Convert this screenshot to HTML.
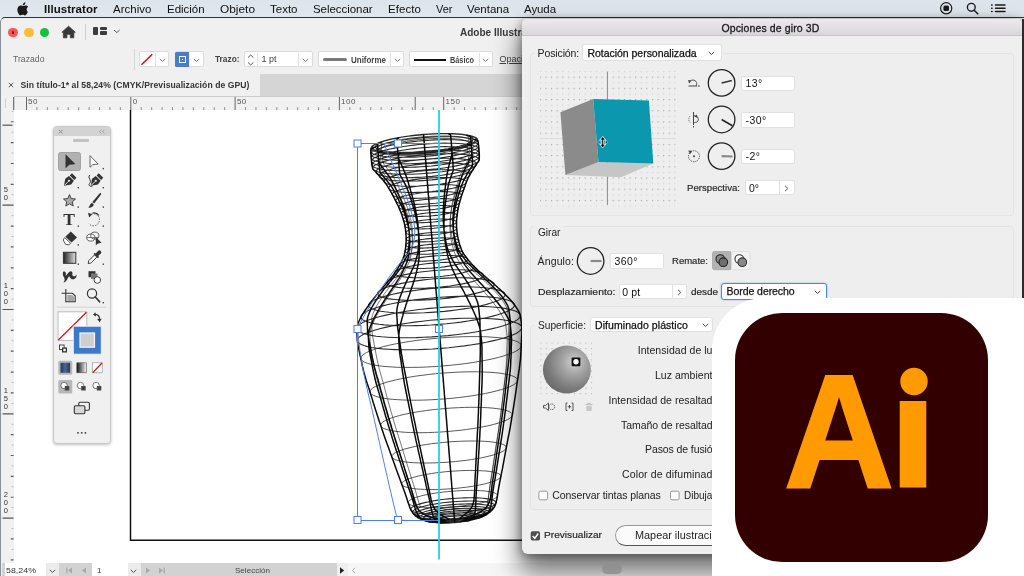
<!DOCTYPE html>
<html lang="es"><head><meta charset="utf-8"><title>Opciones de giro 3D</title><style>
html,body{margin:0;padding:0;}
body{width:1024px;height:576px;overflow:hidden;background:#fff;position:relative;font-family:"Liberation Sans",sans-serif;}
#root{position:absolute;left:0;top:0;width:1024px;height:576px;overflow:hidden;will-change:transform;}
.b{position:absolute;box-sizing:border-box;}
.t{position:absolute;white-space:pre;transform-origin:0 50%;}
svg{position:absolute;overflow:visible;}
</style></head><body><div id="root">
<div class="b" style="left:0.00px;top:0.00px;width:1024.00px;height:17.60px;background:linear-gradient(#dde4ec,#e1e7ee);"></div>
<svg style="left:16.800px;top:1.600px" width="11" height="13.600" viewBox="-1 0 12 14" preserveAspectRatio="none"><path d="M8.2 0.2c0.1 0.9-0.3 1.7-0.8 2.3-0.5 0.6-1.3 1-2.1 0.9-0.1-0.8 0.3-1.7 0.8-2.2C6.6 0.6 7.5 0.2 8.2 0.2zM10.8 10c-0.3 0.8-0.5 1.100-0.900 1.800-0.600 0.900-1.400 2.000-2.400 2.000-0.900 0-1.100-0.600-2.300-0.600-1.200 0-1.500 0.600-2.400 0.600-1 0-1.700-1-2.300-1.900C-0.800 9.500-1.000 6.600 0.300 5.100c0.700-0.900 1.800-1.500 2.900-1.500 1.100 0 1.800 0.600 2.700 0.600 0.900 0 1.400-0.600 2.700-0.600 0.900 0 1.900 0.500 2.600 1.400C8.900 6.300 9.300 9.200 10.800 10z" fill="#1a1a1a"/></svg>
<span class="t" style="left:44.00px;top:1.00px;font-size:11.5px;line-height:16px;color:#111;font-weight:700;letter-spacing:0.041px;">Illustrator</span>
<span class="t" style="left:113.00px;top:1.00px;font-size:11.5px;line-height:16px;color:#111;letter-spacing:0.020px;">Archivo</span>
<span class="t" style="left:167.00px;top:1.00px;font-size:11.5px;line-height:16px;color:#111;letter-spacing:-0.031px;">Edición</span>
<span class="t" style="left:220.00px;top:1.00px;font-size:11.5px;line-height:16px;color:#111;transform:scaleX(1.0327);">Objeto</span>
<span class="t" style="left:270.00px;top:1.00px;font-size:11.5px;line-height:16px;color:#111;">Texto</span>
<span class="t" style="left:313.00px;top:1.00px;font-size:11.5px;line-height:16px;color:#111;letter-spacing:-0.054px;">Seleccionar</span>
<span class="t" style="left:388.00px;top:1.00px;font-size:11.5px;line-height:16px;color:#111;letter-spacing:0.065px;">Efecto</span>
<span class="t" style="left:436.00px;top:1.00px;font-size:11.5px;line-height:16px;color:#111;transform:scaleX(0.9557);">Ver</span>
<span class="t" style="left:467.00px;top:1.00px;font-size:11.5px;line-height:16px;color:#111;letter-spacing:-0.031px;">Ventana</span>
<span class="t" style="left:524.00px;top:1.00px;font-size:11.5px;line-height:16px;color:#111;letter-spacing:-0.081px;">Ayuda</span>
<svg style="left:938px;top:0px" width="80" height="18" viewBox="938 0 80 18"><circle cx="946.2" cy="8.3" r="5.6" fill="none" stroke="#1a1a1a" stroke-width="1.2"/><rect x="943.4" y="5.5" width="5.6" height="5.6" rx="1.6" fill="#1a1a1a"/><circle cx="971.3" cy="7.3" r="3.9" fill="none" stroke="#1a1a1a" stroke-width="1.4"/><path d="M974.1 10.200 L977.800 13.800" stroke="#1a1a1a" stroke-width="1.6" stroke-linecap="round"/><g stroke="#1a1a1a" stroke-width="1.5" stroke-linecap="round"><path d="M995.5 5h9.500M995.500 8.300h9.500M995.500 11.600h9.500"/><path d="M991.600 5h0.500M991.600 8.300h0.500M991.600 11.600h0.500"/></g></svg>
<div class="b" style="left:0.00px;top:17.20px;width:1024.00px;height:560.00px;background:#f0f0f0;border-top:1.900px solid #2e3338;border-left:1.600px solid #88929a;border-top-left-radius:5px;"></div>
<div class="b" style="left:8.00px;top:27.60px;width:9.80px;height:9.80px;border-radius:50%;background:#fc5753;"></div>
<div class="b" style="left:11.50px;top:31.10px;width:2.80px;height:2.80px;border-radius:50%;background:#7d1512;"></div>
<div class="b" style="left:23.80px;top:27.60px;width:9.80px;height:9.80px;border-radius:50%;background:#fdbc40;"></div>
<div class="b" style="left:39.60px;top:27.60px;width:9.80px;height:9.80px;border-radius:50%;background:#11c23c;"></div>
<svg style="left:61px;top:25px" width="16" height="14" viewBox="0 0 16 14"><path d="M7.600 1.200 L14.300 7.300 L12.800 7.300 L12.800 12.800 L9.300 12.800 L9.300 9.300 L5.900 9.300 L5.900 12.800 L2.400 12.800 L2.400 7.300 L0.900 7.300 Z" fill="#383838" stroke="#383838" stroke-width="0.8" stroke-linejoin="round"/></svg>
<div class="b" style="left:85.00px;top:24.00px;width:1.00px;height:15.50px;background:#cfcfcf;"></div>
<div class="b" style="left:93.20px;top:27.00px;width:5.20px;height:7.60px;background:#3c3c3c;border-radius:1px;"></div>
<div class="b" style="left:100.00px;top:27.00px;width:6.50px;height:3.20px;background:#3c3c3c;border-radius:1px;"></div>
<div class="b" style="left:100.00px;top:31.40px;width:6.50px;height:3.20px;background:#3c3c3c;border-radius:1px;"></div>
<svg style="left:112.5px;top:29px" width="8" height="5" viewBox="0 0 8 5"><path d="M1 1 L3.800 3.600 L6.600 1" fill="none" stroke="#555" stroke-width="1"/></svg>
<span class="t" style="left:460.40px;top:25.30px;font-size:11px;line-height:15px;color:#3a3a3a;font-weight:700;transform:scaleX(0.9117);">Adobe Illustrator 2021</span>
<span class="t" style="left:13.00px;top:53.10px;font-size:9px;line-height:13px;color:#666;transform:scaleX(0.9637);">Trazado</span>
<div class="b" style="left:133.50px;top:49.00px;width:1.00px;height:21.00px;background:#d6d6d6;"></div>
<div class="b" style="left:138.60px;top:51.40px;width:30.80px;height:15.80px;background:#fff;border:1px solid #dcdcdc;border-radius:2px;"></div>
<div class="b" style="left:154.60px;top:52.50px;width:1.00px;height:14.00px;background:#e2e2e2;"></div>
<svg style="left:140px;top:53px" width="14" height="13" viewBox="0 0 14 13"><path d="M1.500 11.800 L12.300 1.200" stroke="#c4161c" stroke-width="1.5"/></svg>
<svg style="left:158.80px;top:58.00px" width="7" height="5" viewBox="0 0 7 5"><path d="M0.800 0.900 L3.500 3.500 L6.200 0.900" fill="none" stroke="#777" stroke-width="1"/></svg>
<div class="b" style="left:175.00px;top:51.40px;width:29.40px;height:15.80px;background:#fff;border:1px solid #dcdcdc;border-radius:2px;"></div>
<div class="b" style="left:175.40px;top:52.40px;width:13.80px;height:14.20px;background:#4a7dc3;border-radius:1.5px 0 0 1.5px;"></div>
<div class="b" style="left:179.20px;top:56.40px;width:6.40px;height:6.40px;border:1px solid #f4f7fc;"></div>
<div class="b" style="left:181.60px;top:58.80px;width:1.60px;height:1.60px;background:#f4f7fc;"></div>
<svg style="left:193.30px;top:58.00px" width="7" height="5" viewBox="0 0 7 5"><path d="M0.800 0.900 L3.500 3.500 L6.200 0.900" fill="none" stroke="#777" stroke-width="1"/></svg>
<span class="t" style="left:214.70px;top:53.40px;font-size:9px;line-height:13px;color:#444;font-weight:700;transform:scaleX(0.9240);">Trazo:</span>
<div class="b" style="left:243.60px;top:51.40px;width:69.40px;height:15.80px;background:#fff;border:1px solid #dcdcdc;border-radius:2px;"></div>
<div class="b" style="left:257.30px;top:52.50px;width:1.00px;height:14.00px;background:#e2e2e2;"></div>
<div class="b" style="left:298.20px;top:52.50px;width:1.00px;height:14.00px;background:#e2e2e2;"></div>
<svg style="left:247px;top:53.500px" width="8" height="12" viewBox="0 0 8 12"><path d="M1 3.600 L3.700 1 L6.400 3.600 M1 8.400 L3.700 11 L6.400 8.400" fill="none" stroke="#555" stroke-width="1"/></svg>
<span class="t" style="left:261.50px;top:53.30px;font-size:9px;line-height:13px;color:#444;">1 pt</span>
<svg style="left:302.00px;top:58.00px" width="7" height="5" viewBox="0 0 7 5"><path d="M0.800 0.900 L3.500 3.500 L6.200 0.900" fill="none" stroke="#777" stroke-width="1"/></svg>
<div class="b" style="left:318.00px;top:51.40px;width:86.00px;height:15.80px;background:#fff;border:1px solid #dcdcdc;border-radius:2px;"></div>
<div class="b" style="left:390.40px;top:52.50px;width:1.00px;height:14.00px;background:#e2e2e2;"></div>
<div class="b" style="left:323.00px;top:58.20px;width:23.70px;height:3.00px;background:#7a7a7a;border-radius:1.5px;"></div>
<span class="t" style="left:350.80px;top:54.00px;font-size:8.5px;line-height:12px;color:#444;font-weight:700;transform:scaleX(0.9380);">Uniforme</span>
<svg style="left:393.70px;top:58.00px" width="7" height="5" viewBox="0 0 7 5"><path d="M0.800 0.900 L3.500 3.500 L6.200 0.900" fill="none" stroke="#777" stroke-width="1"/></svg>
<div class="b" style="left:408.80px;top:51.40px;width:84.40px;height:15.80px;background:#fff;border:1px solid #dcdcdc;border-radius:2px;"></div>
<div class="b" style="left:478.50px;top:52.50px;width:1.00px;height:14.00px;background:#e2e2e2;"></div>
<div class="b" style="left:414.00px;top:59.00px;width:31.60px;height:1.60px;background:#111;"></div>
<span class="t" style="left:450.00px;top:54.00px;font-size:8.5px;line-height:12px;color:#444;font-weight:700;transform:scaleX(0.8610);">Básico</span>
<svg style="left:482.30px;top:58.00px" width="7" height="5" viewBox="0 0 7 5"><path d="M0.800 0.900 L3.500 3.500 L6.200 0.900" fill="none" stroke="#777" stroke-width="1"/></svg>
<span class="t" style="left:499.50px;top:53.30px;font-size:9px;line-height:13px;color:#444;text-decoration:underline;">Opacidad:</span>
<div class="b" style="left:2.00px;top:74.00px;width:1022.00px;height:22.00px;background:#d5d5d5;"></div>
<div class="b" style="left:2.00px;top:74.00px;width:258.00px;height:22.00px;background:#f0f0f0;"></div>
<svg style="left:7.500px;top:82px" width="6" height="6" viewBox="0 0 6 6"><path d="M0.800 0.800 L5.200 5.200 M5.200 0.800 L0.800 5.200" stroke="#444" stroke-width="0.9"/></svg>
<span class="t" style="left:20.50px;top:78.80px;font-size:8.6px;line-height:12px;color:#333;font-weight:700;letter-spacing:0.067px;">Sin título-1* al 58,24% (CMYK/Previsualización de GPU)</span>
<div class="b" style="left:2.00px;top:96.00px;width:1022.00px;height:14.00px;background:#f1f1f1;border-top:1px solid #cdcdcd;"></div>
<div class="b" style="left:2.00px;top:96.00px;width:12.20px;height:467.00px;background:#f1f1f1;"></div>
<div class="b" style="left:14.20px;top:110.00px;width:1010.00px;height:453.50px;background:#fff;"></div>
<svg style="left:0;top:0" width="1024" height="576" viewBox="0 0 1024 576"><path d="M13.700 97 V110" stroke="#555" stroke-width="1"/><path d="M5.500 98.500 V108" stroke="#cfcfcf" stroke-width="1"/><path d="M36.93 107.200V110M47.36 107.200V110M57.79 107.200V110M68.22 107.200V110M78.65 107.200V110M89.08 107.200V110M99.51 107.200V110M109.94 107.200V110M120.37 107.200V110M141.23 107.200V110M151.66 107.200V110M162.09 107.200V110M172.52 107.200V110M182.95 107.200V110M193.38 107.200V110M203.81 107.200V110M214.24 107.200V110M224.67 107.200V110M245.53 107.200V110M255.96 107.200V110M266.39 107.200V110M276.82 107.200V110M287.25 107.200V110M297.68 107.200V110M308.11 107.200V110M318.54 107.200V110M328.97 107.200V110M349.83 107.200V110M360.26 107.200V110M370.69 107.200V110M381.12 107.200V110M391.55 107.200V110M401.98 107.200V110M412.41 107.200V110M422.84 107.200V110M433.27 107.200V110M454.13 107.200V110M464.56 107.200V110M474.99 107.200V110M485.42 107.200V110M495.85 107.200V110M506.28 107.200V110M516.71 107.200V110" stroke="#8a8a8a" stroke-width="1"/><path d="M26.50 97V110M130.80 97V110M235.10 97V110M339.40 97V110M443.70 97V110M415.200 97V110" stroke="#666" stroke-width="1"/><path d="M10.800 121.76H13.500M10.800 142.62H13.500M10.800 163.48H13.500M10.800 184.34H13.500M10.800 226.06H13.500M10.800 246.92H13.500M10.800 267.78H13.500M10.800 288.64H13.500M10.800 330.36H13.500M10.800 351.22H13.500M10.800 372.08H13.500M10.800 392.94H13.500M10.800 434.66H13.500M10.800 455.52H13.500M10.800 476.38H13.500M10.800 497.24H13.500M10.800 538.96H13.500M10.800 559.82H13.500" stroke="#555" stroke-width="1.2"/><path d="M11.500 111.33H13.500M11.500 132.19H13.500M11.500 153.05H13.500M11.500 173.91H13.500M11.500 194.77H13.500M11.500 215.63H13.500M11.500 236.49H13.500M11.500 257.35H13.500M11.500 278.21H13.500M11.500 299.07H13.500M11.500 319.93H13.500M11.500 340.79H13.500M11.500 361.65H13.500M11.500 382.51H13.500M11.500 403.37H13.500M11.500 424.23H13.500M11.500 445.09H13.500M11.500 465.95H13.500M11.500 486.81H13.500M11.500 507.67H13.500M11.500 528.53H13.500M11.500 549.39H13.500" stroke="#bbb" stroke-width="1"/><path d="M2.500 205.20H13.500M2.500 309.50H13.500M2.500 413.80H13.500M2.500 518.10H13.500" stroke="#555" stroke-width="1.2"/><path d="M2.500 125.200H12.500" stroke="#555" stroke-width="1.2"/></svg>
<span class="t" style="left:28.00px;top:96.20px;font-size:8px;line-height:12px;color:#555;letter-spacing:0.500px;">50</span>
<span class="t" style="left:132.80px;top:96.20px;font-size:8px;line-height:12px;color:#555;letter-spacing:0.500px;">0</span>
<span class="t" style="left:236.90px;top:96.20px;font-size:8px;line-height:12px;color:#555;letter-spacing:0.500px;">50</span>
<span class="t" style="left:341.10px;top:96.20px;font-size:8px;line-height:12px;color:#555;letter-spacing:0.500px;">100</span>
<span class="t" style="left:445.50px;top:96.20px;font-size:8px;line-height:12px;color:#555;letter-spacing:0.500px;">150</span>
<span class="t" style="left:1.400px;top:185.2px;width:8px;font-size:7.500px;line-height:8px;color:#333;writing-mode:vertical-rl;text-orientation:upright;letter-spacing:-1px;">50</span>
<span class="t" style="left:1.400px;top:281.2px;width:8px;font-size:7.500px;line-height:8px;color:#333;writing-mode:vertical-rl;text-orientation:upright;letter-spacing:-1px;">100</span>
<span class="t" style="left:1.400px;top:385.5px;width:8px;font-size:7.500px;line-height:8px;color:#333;writing-mode:vertical-rl;text-orientation:upright;letter-spacing:-1px;">150</span>
<span class="t" style="left:1.400px;top:489.9px;width:8px;font-size:7.500px;line-height:8px;color:#333;writing-mode:vertical-rl;text-orientation:upright;letter-spacing:-1px;">200</span>
<div class="b" style="left:2.00px;top:563.40px;width:1022.00px;height:13.00px;background:#d2d2d2;"></div>
<div class="b" style="left:4.50px;top:563.40px;width:41.00px;height:13.00px;background:#fff;"></div>
<div class="b" style="left:45.50px;top:563.40px;width:13.00px;height:13.00px;background:#ebebeb;"></div>
<div class="b" style="left:92.00px;top:563.40px;width:35.50px;height:13.00px;background:#fff;"></div>
<div class="b" style="left:127.50px;top:563.40px;width:13.00px;height:13.00px;background:#ebebeb;"></div>
<div class="b" style="left:337.00px;top:563.40px;width:11.00px;height:13.00px;background:#efefef;"></div>
<div class="b" style="left:348.00px;top:563.40px;width:676.00px;height:13.00px;background:#f6f6f6;"></div>
<span class="t" style="left:6.00px;top:564.60px;font-size:8px;line-height:12px;color:#333;transform:scaleX(1.1054);">58,24%</span>
<svg style="left:48.50px;top:568.50px" width="7" height="5" viewBox="0 0 7 5"><path d="M0.800 0.900 L3.500 3.500 L6.200 0.900" fill="none" stroke="#555" stroke-width="1"/></svg>
<svg style="left:130.20px;top:568.50px" width="7" height="5" viewBox="0 0 7 5"><path d="M0.800 0.900 L3.500 3.500 L6.200 0.900" fill="none" stroke="#555" stroke-width="1"/></svg>
<span class="t" style="left:97.00px;top:564.60px;font-size:8px;line-height:12px;color:#333;">1</span>
<svg style="left:60px;top:565px" width="112" height="11" viewBox="60 565 112 11"><g fill="#a9a9a9"><path d="M72 567.500 L72 573.500 L68 570.500Z"/><rect x="66.300" y="567.500" width="1.200" height="6"/><path d="M86 567.500 L86 573.500 L82 570.500Z"/><path d="M146 567.500 L146 573.500 L150 570.500Z"/><path d="M159 567.500 L159 573.500 L163 570.500Z"/><rect x="163.600" y="567.500" width="1.200" height="6"/></g></svg>
<span class="t" style="left:235.00px;top:564.80px;font-size:8px;line-height:12px;color:#444;letter-spacing:0.035px;">Selección</span>
<svg style="left:337px;top:566px" width="10" height="9" viewBox="0 0 10 9"><path d="M3 1.200 L3 7.800 L7.200 4.500Z" fill="#222"/></svg>
<svg style="left:351px;top:567px" width="6" height="7" viewBox="0 0 6 7"><path d="M4 0.800 L1.500 3.500 L4 6.200" fill="none" stroke="#999" stroke-width="0.900"/></svg>
<svg style="left:0;top:0" width="1024" height="576" viewBox="0 0 1024 576"><path d="M130.500 110 V540.300 H700" fill="none" stroke="#111" stroke-width="1.500"/><path d="M473.1 139.1 L472.9 139.9 L472.3 140.8 L471.2 141.7 L469.6 142.6 L467.6 143.6 L465.2 144.5 L462.4 145.4 L459.2 146.3 L455.7 147.1 L451.9 147.9 L447.8 148.7 L443.5 149.4 L439.1 150.0 L434.4 150.6 L429.7 151.1 L424.9 151.5 L420.1 151.9 L415.4 152.1 L410.7 152.3 L406.2 152.4 L401.8 152.4 L397.7 152.3 L393.8 152.1 L390.2 151.8 L386.9 151.5 L384.0 151.0 L381.5 150.5 L379.4 149.9 L377.7 149.2 L376.4 148.5 L375.7 147.7 L375.4 146.9 L375.5 146.1 L376.2 145.2 L377.3 144.3 L378.8 143.4 L380.8 142.4 L383.2 141.5 L386.0 140.6 L389.2 139.7 L392.7 138.9 L396.5 138.1 L400.6 137.3 L404.9 136.6 L409.4 136.0 L414.0 135.4 L418.7 134.9 L423.5 134.5 L428.3 134.1 L433.1 133.9 L437.7 133.7 L442.3 133.6 L446.6 133.6 L450.8 133.7 L454.7 133.9 L458.3 134.2 L461.5 134.5 L464.4 135.0 L467.0 135.5 L469.1 136.1 L470.8 136.8 L472.0 137.5 L472.8 138.3ZM476.1 139.3 L475.9 140.2 L475.2 141.2 L474.1 142.1 L472.4 143.1 L470.3 144.1 L467.8 145.1 L464.8 146.0 L461.4 147.0 L457.7 147.9 L453.7 148.7 L449.3 149.5 L444.8 150.3 L440.0 151.0 L435.1 151.6 L430.1 152.1 L425.0 152.6 L419.9 152.9 L414.9 153.2 L409.9 153.4 L405.1 153.5 L400.5 153.5 L396.1 153.4 L391.9 153.2 L388.1 152.9 L384.7 152.5 L381.6 152.0 L378.9 151.5 L376.7 150.8 L374.9 150.1 L373.6 149.4 L372.7 148.5 L372.4 147.7 L372.6 146.8 L373.3 145.8 L374.4 144.9 L376.1 143.9 L378.2 142.9 L380.8 141.9 L383.7 141.0 L387.1 140.0 L390.8 139.1 L394.9 138.3 L399.2 137.5 L403.7 136.7 L408.5 136.0 L413.4 135.4 L418.5 134.9 L423.5 134.4 L428.6 134.1 L433.7 133.8 L438.6 133.6 L443.4 133.5 L448.0 133.5 L452.4 133.6 L456.6 133.8 L460.4 134.1 L463.9 134.5 L467.0 135.0 L469.6 135.5 L471.9 136.2 L473.6 136.9 L475.0 137.6 L475.8 138.5ZM477.6 139.7 L477.4 140.6 L476.7 141.6 L475.5 142.6 L473.9 143.6 L471.7 144.6 L469.1 145.6 L466.0 146.6 L462.5 147.6 L458.7 148.5 L454.6 149.4 L450.1 150.2 L445.4 151.0 L440.5 151.7 L435.4 152.3 L430.3 152.9 L425.0 153.3 L419.8 153.7 L414.6 154.0 L409.5 154.2 L404.6 154.3 L399.8 154.3 L395.3 154.1 L391.0 153.9 L387.1 153.6 L383.6 153.2 L380.4 152.7 L377.6 152.2 L375.3 151.5 L373.5 150.8 L372.1 150.0 L371.3 149.2 L371.0 148.3 L371.2 147.4 L371.8 146.4 L373.0 145.4 L374.7 144.4 L376.9 143.4 L379.5 142.4 L382.6 141.4 L386.1 140.4 L389.9 139.5 L394.0 138.6 L398.5 137.8 L403.2 137.0 L408.1 136.3 L413.2 135.7 L418.3 135.1 L423.5 134.7 L428.8 134.3 L434.0 134.0 L439.1 133.8 L444.0 133.7 L448.8 133.7 L453.3 133.9 L457.6 134.1 L461.5 134.4 L465.0 134.8 L468.2 135.3 L471.0 135.8 L473.3 136.5 L475.1 137.2 L476.5 138.0 L477.3 138.8ZM478.3 142.7 L478.1 143.6 L477.4 144.6 L476.2 145.6 L474.5 146.6 L472.3 147.6 L469.6 148.6 L466.6 149.6 L463.1 150.6 L459.2 151.5 L455.0 152.4 L450.5 153.3 L445.8 154.0 L440.9 154.7 L435.8 155.4 L430.6 155.9 L425.3 156.4 L420.0 156.8 L414.8 157.1 L409.7 157.3 L404.7 157.3 L399.9 157.3 L395.3 157.2 L391.0 157.0 L387.1 156.7 L383.5 156.3 L380.3 155.8 L377.5 155.2 L375.2 154.6 L373.3 153.9 L372.0 153.1 L371.1 152.2 L370.8 151.3 L371.0 150.4 L371.7 149.4 L372.9 148.4 L374.6 147.4 L376.8 146.4 L379.4 145.4 L382.5 144.4 L386.0 143.4 L389.9 142.5 L394.1 141.6 L398.5 140.7 L403.3 140.0 L408.2 139.3 L413.3 138.6 L418.5 138.1 L423.8 137.6 L429.1 137.2 L434.3 136.9 L439.4 136.7 L444.4 136.7 L449.2 136.7 L453.8 136.8 L458.0 137.0 L462.0 137.3 L465.6 137.7 L468.8 138.2 L471.6 138.8 L473.9 139.4 L475.7 140.1 L477.1 140.9 L477.9 141.8ZM478.6 145.7 L478.4 146.6 L477.7 147.6 L476.5 148.6 L474.8 149.6 L472.6 150.6 L470.0 151.6 L466.9 152.6 L463.4 153.6 L459.5 154.5 L455.3 155.4 L450.8 156.3 L446.1 157.0 L441.1 157.8 L436.0 158.4 L430.8 159.0 L425.5 159.4 L420.3 159.8 L415.0 160.1 L409.9 160.3 L404.9 160.4 L400.1 160.3 L395.5 160.2 L391.2 160.0 L387.3 159.7 L383.7 159.3 L380.4 158.8 L377.7 158.3 L375.3 157.6 L373.5 156.9 L372.1 156.1 L371.3 155.2 L371.0 154.3 L371.1 153.4 L371.8 152.4 L373.1 151.4 L374.8 150.4 L377.0 149.4 L379.6 148.4 L382.7 147.4 L386.2 146.4 L390.0 145.5 L394.2 144.6 L398.7 143.7 L403.5 143.0 L408.4 142.2 L413.5 141.6 L418.8 141.0 L424.0 140.6 L429.3 140.2 L434.5 139.9 L439.7 139.7 L444.7 139.6 L449.5 139.7 L454.1 139.8 L458.3 140.0 L462.3 140.3 L465.9 140.7 L469.1 141.2 L471.9 141.7 L474.2 142.4 L476.1 143.1 L477.4 143.9 L478.3 144.8ZM478.9 149.2 L478.7 150.1 L478.0 151.1 L476.8 152.1 L475.1 153.1 L472.9 154.1 L470.2 155.1 L467.2 156.1 L463.7 157.1 L459.8 158.0 L455.6 158.9 L451.1 159.8 L446.4 160.5 L441.4 161.3 L436.3 161.9 L431.1 162.5 L425.8 162.9 L420.5 163.3 L415.3 163.6 L410.2 163.8 L405.2 163.9 L400.4 163.8 L395.8 163.7 L391.5 163.5 L387.5 163.2 L383.9 162.8 L380.7 162.3 L377.9 161.8 L375.6 161.1 L373.8 160.4 L372.4 159.6 L371.6 158.7 L371.2 157.8 L371.4 156.9 L372.1 155.9 L373.3 154.9 L375.0 153.9 L377.2 152.9 L379.9 151.9 L383.0 150.9 L386.5 149.9 L390.3 149.0 L394.5 148.1 L399.0 147.2 L403.8 146.5 L408.7 145.7 L413.8 145.1 L419.0 144.5 L424.3 144.1 L429.6 143.7 L434.8 143.4 L440.0 143.2 L445.0 143.1 L449.8 143.2 L454.3 143.3 L458.6 143.5 L462.6 143.8 L466.2 144.2 L469.4 144.7 L472.2 145.2 L474.5 145.9 L476.4 146.6 L477.7 147.4 L478.6 148.3ZM479.2 152.7 L479.0 153.6 L478.3 154.6 L477.1 155.6 L475.4 156.6 L473.2 157.6 L470.5 158.6 L467.4 159.6 L463.9 160.6 L460.1 161.5 L455.9 162.4 L451.4 163.3 L446.6 164.0 L441.7 164.8 L436.6 165.4 L431.4 166.0 L426.1 166.4 L420.8 166.8 L415.6 167.1 L410.4 167.3 L405.4 167.4 L400.6 167.3 L396.1 167.2 L391.8 167.0 L387.8 166.7 L384.2 166.3 L381.0 165.8 L378.2 165.3 L375.9 164.6 L374.1 163.9 L372.7 163.1 L371.9 162.2 L371.5 161.3 L371.7 160.4 L372.4 159.4 L373.6 158.4 L375.3 157.4 L377.5 156.4 L380.2 155.4 L383.3 154.4 L386.7 153.4 L390.6 152.5 L394.8 151.6 L399.3 150.7 L404.0 150.0 L409.0 149.2 L414.1 148.6 L419.3 148.0 L424.6 147.6 L429.9 147.2 L435.1 146.9 L440.2 146.7 L445.2 146.6 L450.0 146.7 L454.6 146.8 L458.9 147.0 L462.9 147.3 L466.5 147.7 L469.7 148.2 L472.5 148.7 L474.8 149.4 L476.6 150.1 L478.0 150.9 L478.8 151.8ZM479.3 156.2 L479.1 157.1 L478.4 158.1 L477.2 159.1 L475.5 160.1 L473.3 161.1 L470.7 162.1 L467.6 163.1 L464.1 164.1 L460.3 165.0 L456.1 165.9 L451.6 166.8 L446.9 167.5 L441.9 168.2 L436.8 168.9 L431.6 169.4 L426.4 169.9 L421.1 170.3 L415.9 170.6 L410.8 170.7 L405.8 170.8 L401.0 170.8 L396.4 170.7 L392.1 170.5 L388.2 170.2 L384.6 169.8 L381.4 169.3 L378.6 168.7 L376.3 168.1 L374.5 167.4 L373.1 166.6 L372.3 165.7 L371.9 164.8 L372.1 163.9 L372.8 162.9 L374.0 161.9 L375.7 160.9 L377.9 159.9 L380.6 158.9 L383.6 157.9 L387.1 156.9 L391.0 156.0 L395.2 155.1 L399.6 154.2 L404.4 153.5 L409.3 152.8 L414.4 152.1 L419.6 151.6 L424.9 151.1 L430.1 150.7 L435.4 150.4 L440.5 150.3 L445.5 150.2 L450.3 150.2 L454.8 150.3 L459.1 150.5 L463.1 150.8 L466.7 151.2 L469.9 151.7 L472.6 152.3 L474.9 152.9 L476.8 153.6 L478.1 154.4 L479.0 155.3ZM479.2 159.7 L479.1 160.6 L478.4 161.6 L477.2 162.6 L475.5 163.6 L473.3 164.6 L470.7 165.6 L467.6 166.6 L464.1 167.6 L460.3 168.5 L456.2 169.4 L451.7 170.2 L447.0 171.0 L442.1 171.7 L437.0 172.3 L431.9 172.9 L426.7 173.3 L421.4 173.7 L416.2 174.0 L411.1 174.2 L406.2 174.3 L401.4 174.3 L396.9 174.1 L392.7 173.9 L388.7 173.6 L385.2 173.2 L382.0 172.7 L379.2 172.2 L376.9 171.5 L375.1 170.8 L373.7 170.0 L372.9 169.2 L372.6 168.3 L372.8 167.4 L373.5 166.4 L374.7 165.4 L376.4 164.4 L378.5 163.4 L381.1 162.4 L384.2 161.4 L387.7 160.4 L391.5 159.5 L395.7 158.6 L400.1 157.8 L404.8 157.0 L409.7 156.3 L414.8 155.7 L419.9 155.1 L425.2 154.7 L430.4 154.3 L435.6 154.0 L440.7 153.8 L445.6 153.7 L450.4 153.7 L454.9 153.9 L459.2 154.1 L463.1 154.4 L466.7 154.8 L469.8 155.3 L472.6 155.8 L474.9 156.5 L476.7 157.2 L478.1 158.0 L478.9 158.8ZM476.6 164.0 L476.4 164.8 L475.7 165.8 L474.6 166.7 L473.0 167.6 L471.0 168.6 L468.5 169.5 L465.6 170.5 L462.3 171.4 L458.7 172.2 L454.8 173.1 L450.6 173.9 L446.1 174.6 L441.5 175.3 L436.7 175.9 L431.9 176.4 L426.9 176.8 L422.0 177.2 L417.1 177.4 L412.3 177.6 L407.6 177.7 L403.1 177.7 L398.9 177.6 L394.8 177.4 L391.1 177.1 L387.8 176.7 L384.8 176.3 L382.2 175.7 L380.0 175.1 L378.3 174.4 L377.0 173.7 L376.2 172.9 L375.9 172.0 L376.1 171.2 L376.7 170.2 L377.9 169.3 L379.5 168.4 L381.5 167.4 L384.0 166.5 L386.9 165.5 L390.1 164.6 L393.7 163.8 L397.7 162.9 L401.9 162.1 L406.3 161.4 L410.9 160.7 L415.7 160.1 L420.6 159.6 L425.5 159.2 L430.5 158.8 L435.4 158.6 L440.2 158.4 L444.8 158.3 L449.3 158.3 L453.6 158.4 L457.6 158.6 L461.3 158.9 L464.7 159.3 L467.7 159.7 L470.3 160.3 L472.5 160.9 L474.2 161.6 L475.5 162.3 L476.3 163.1ZM473.9 168.2 L473.7 169.0 L473.1 169.9 L472.1 170.8 L470.5 171.7 L468.6 172.5 L466.3 173.4 L463.6 174.3 L460.5 175.2 L457.1 176.0 L453.4 176.8 L449.5 177.5 L445.3 178.2 L440.9 178.8 L436.4 179.4 L431.9 179.9 L427.2 180.3 L422.6 180.6 L418.0 180.9 L413.4 181.0 L409.0 181.1 L404.8 181.1 L400.8 181.0 L397.0 180.8 L393.5 180.6 L390.4 180.2 L387.6 179.8 L385.1 179.3 L383.1 178.7 L381.4 178.0 L380.2 177.3 L379.5 176.6 L379.2 175.8 L379.4 175.0 L380.0 174.1 L381.0 173.2 L382.6 172.3 L384.5 171.5 L386.8 170.6 L389.5 169.7 L392.6 168.8 L396.0 168.0 L399.7 167.2 L403.6 166.5 L407.8 165.8 L412.2 165.2 L416.7 164.6 L421.2 164.1 L425.9 163.7 L430.5 163.4 L435.1 163.1 L439.7 163.0 L444.1 162.9 L448.3 162.9 L452.3 163.0 L456.1 163.2 L459.6 163.4 L462.7 163.8 L465.5 164.2 L468.0 164.7 L470.0 165.3 L471.7 166.0 L472.9 166.7 L473.6 167.4ZM469.9 174.6 L469.7 175.3 L469.2 176.1 L468.2 176.9 L466.9 177.7 L465.1 178.5 L463.0 179.3 L460.5 180.1 L457.8 180.9 L454.7 181.6 L451.3 182.3 L447.8 183.0 L444.0 183.6 L440.1 184.2 L436.0 184.7 L431.8 185.1 L427.6 185.5 L423.4 185.8 L419.3 186.0 L415.2 186.2 L411.2 186.2 L407.4 186.2 L403.7 186.2 L400.3 186.0 L397.2 185.7 L394.3 185.4 L391.7 185.0 L389.5 184.6 L387.7 184.1 L386.2 183.5 L385.1 182.8 L384.4 182.2 L384.2 181.4 L384.3 180.7 L384.9 179.9 L385.8 179.1 L387.2 178.3 L388.9 177.5 L391.1 176.7 L393.5 175.9 L396.3 175.1 L399.4 174.4 L402.7 173.7 L406.3 173.0 L410.1 172.4 L414.0 171.8 L418.1 171.3 L422.2 170.9 L426.4 170.5 L430.6 170.2 L434.8 170.0 L438.9 169.8 L442.9 169.8 L446.7 169.8 L450.3 169.8 L453.8 170.0 L456.9 170.3 L459.8 170.6 L462.3 171.0 L464.5 171.4 L466.4 171.9 L467.9 172.5 L469.0 173.2 L469.6 173.8ZM466.5 181.9 L466.3 182.6 L465.8 183.3 L465.0 184.0 L463.7 184.7 L462.1 185.5 L460.2 186.2 L458.0 186.9 L455.5 187.6 L452.7 188.3 L449.6 188.9 L446.4 189.5 L443.0 190.1 L439.4 190.6 L435.7 191.1 L431.9 191.5 L428.1 191.8 L424.3 192.1 L420.5 192.3 L416.8 192.4 L413.2 192.5 L409.8 192.5 L406.5 192.4 L403.4 192.2 L400.5 192.0 L397.9 191.7 L395.6 191.4 L393.6 191.0 L391.9 190.5 L390.6 190.0 L389.6 189.4 L389.0 188.8 L388.7 188.1 L388.9 187.4 L389.4 186.7 L390.2 186.0 L391.5 185.3 L393.1 184.5 L395.0 183.8 L397.2 183.1 L399.7 182.4 L402.5 181.7 L405.5 181.1 L408.8 180.5 L412.2 179.9 L415.8 179.4 L419.5 178.9 L423.2 178.5 L427.0 178.2 L430.9 177.9 L434.6 177.7 L438.4 177.6 L442.0 177.5 L445.4 177.5 L448.7 177.6 L451.8 177.8 L454.7 178.0 L457.3 178.3 L459.6 178.6 L461.6 179.0 L463.3 179.5 L464.6 180.0 L465.6 180.6 L466.2 181.2ZM464.0 188.6 L463.9 189.2 L463.4 189.9 L462.6 190.6 L461.5 191.2 L460.0 191.9 L458.2 192.6 L456.2 193.3 L453.8 193.9 L451.3 194.5 L448.5 195.1 L445.5 195.7 L442.3 196.2 L439.0 196.7 L435.6 197.1 L432.1 197.5 L428.6 197.8 L425.1 198.0 L421.6 198.2 L418.2 198.3 L414.9 198.4 L411.6 198.4 L408.6 198.3 L405.7 198.2 L403.1 198.0 L400.7 197.7 L398.6 197.4 L396.7 197.0 L395.2 196.6 L393.9 196.1 L393.0 195.6 L392.5 195.0 L392.2 194.4 L392.4 193.8 L392.8 193.1 L393.6 192.4 L394.8 191.8 L396.2 191.1 L398.0 190.4 L400.1 189.7 L402.4 189.1 L405.0 188.5 L407.8 187.9 L410.8 187.3 L413.9 186.8 L417.2 186.3 L420.6 185.9 L424.1 185.5 L427.6 185.2 L431.1 185.0 L434.6 184.8 L438.1 184.7 L441.4 184.6 L444.6 184.6 L447.6 184.7 L450.5 184.8 L453.1 185.0 L455.5 185.3 L457.7 185.6 L459.5 186.0 L461.1 186.4 L462.3 186.9 L463.2 187.4 L463.8 188.0ZM461.7 195.3 L461.6 195.9 L461.2 196.5 L460.4 197.1 L459.4 197.8 L458.0 198.4 L456.4 199.0 L454.5 199.6 L452.4 200.2 L450.0 200.8 L447.4 201.3 L444.7 201.9 L441.7 202.3 L438.7 202.8 L435.6 203.2 L432.3 203.5 L429.1 203.8 L425.9 204.0 L422.6 204.2 L419.5 204.3 L416.4 204.4 L413.5 204.4 L410.6 204.3 L408.0 204.2 L405.6 204.0 L403.4 203.7 L401.4 203.4 L399.7 203.1 L398.2 202.7 L397.1 202.2 L396.3 201.7 L395.8 201.2 L395.5 200.7 L395.7 200.1 L396.1 199.5 L396.8 198.9 L397.9 198.2 L399.2 197.6 L400.9 197.0 L402.8 196.4 L404.9 195.8 L407.3 195.2 L409.9 194.7 L412.6 194.1 L415.5 193.7 L418.6 193.2 L421.7 192.8 L424.9 192.5 L428.2 192.2 L431.4 192.0 L434.6 191.8 L437.8 191.7 L440.9 191.6 L443.8 191.6 L446.6 191.7 L449.3 191.8 L451.7 192.0 L453.9 192.3 L455.9 192.6 L457.6 192.9 L459.0 193.3 L460.2 193.8 L461.0 194.3 L461.5 194.8ZM459.7 202.0 L459.6 202.6 L459.2 203.1 L458.5 203.7 L457.5 204.3 L456.3 204.9 L454.8 205.4 L453.0 206.0 L451.0 206.5 L448.8 207.1 L446.5 207.6 L443.9 208.1 L441.2 208.5 L438.4 208.9 L435.5 209.3 L432.6 209.6 L429.6 209.8 L426.6 210.1 L423.6 210.2 L420.7 210.3 L417.9 210.4 L415.2 210.4 L412.6 210.3 L410.1 210.2 L407.9 210.0 L405.9 209.8 L404.0 209.5 L402.5 209.2 L401.1 208.8 L400.1 208.4 L399.3 207.9 L398.8 207.5 L398.7 207.0 L398.8 206.4 L399.2 205.9 L399.8 205.3 L400.8 204.7 L402.1 204.1 L403.6 203.6 L405.3 203.0 L407.3 202.5 L409.5 201.9 L411.9 201.4 L414.4 200.9 L417.1 200.5 L419.9 200.1 L422.8 199.7 L425.7 199.4 L428.7 199.2 L431.7 198.9 L434.7 198.8 L437.6 198.7 L440.4 198.6 L443.2 198.6 L445.8 198.7 L448.2 198.8 L450.4 199.0 L452.5 199.2 L454.3 199.5 L455.9 199.8 L457.2 200.2 L458.2 200.6 L459.0 201.1 L459.5 201.5ZM458.1 208.7 L458.0 209.2 L457.6 209.7 L457.0 210.3 L456.1 210.8 L454.9 211.3 L453.5 211.9 L451.9 212.4 L450.1 212.9 L448.0 213.4 L445.8 213.9 L443.4 214.3 L440.9 214.7 L438.3 215.1 L435.6 215.4 L432.9 215.7 L430.1 216.0 L427.3 216.2 L424.5 216.3 L421.8 216.4 L419.2 216.5 L416.6 216.5 L414.2 216.4 L412.0 216.3 L409.9 216.1 L408.0 215.9 L406.3 215.7 L404.8 215.4 L403.6 215.0 L402.6 214.6 L401.9 214.2 L401.5 213.8 L401.3 213.3 L401.4 212.8 L401.7 212.3 L402.4 211.7 L403.3 211.2 L404.4 210.7 L405.8 210.1 L407.5 209.6 L409.3 209.1 L411.4 208.6 L413.6 208.1 L415.9 207.7 L418.4 207.3 L421.1 206.9 L423.8 206.6 L426.5 206.3 L429.3 206.0 L432.1 205.8 L434.8 205.7 L437.5 205.6 L440.2 205.5 L442.7 205.5 L445.1 205.6 L447.4 205.7 L449.5 205.9 L451.4 206.1 L453.1 206.3 L454.6 206.6 L455.8 207.0 L456.8 207.4 L457.5 207.8 L457.9 208.2ZM457.1 215.3 L457.0 215.8 L456.7 216.3 L456.1 216.8 L455.2 217.3 L454.1 217.8 L452.8 218.3 L451.3 218.8 L449.5 219.3 L447.6 219.8 L445.5 220.2 L443.2 220.6 L440.9 221.0 L438.4 221.4 L435.8 221.7 L433.2 222.0 L430.6 222.2 L427.9 222.4 L425.3 222.5 L422.8 222.6 L420.3 222.7 L417.9 222.7 L415.6 222.6 L413.4 222.5 L411.4 222.4 L409.6 222.2 L408.0 221.9 L406.7 221.6 L405.5 221.3 L404.6 220.9 L403.9 220.5 L403.5 220.1 L403.3 219.7 L403.4 219.2 L403.7 218.7 L404.3 218.2 L405.2 217.7 L406.3 217.2 L407.6 216.7 L409.2 216.2 L410.9 215.7 L412.8 215.2 L414.9 214.8 L417.2 214.4 L419.6 214.0 L422.0 213.6 L424.6 213.3 L427.2 213.0 L429.8 212.8 L432.5 212.6 L435.1 212.5 L437.7 212.4 L440.2 212.3 L442.6 212.3 L444.8 212.4 L447.0 212.5 L449.0 212.6 L450.8 212.8 L452.4 213.1 L453.8 213.4 L454.9 213.7 L455.9 214.1 L456.5 214.5 L457.0 214.9ZM456.5 221.9 L456.5 222.4 L456.1 222.8 L455.5 223.3 L454.7 223.8 L453.7 224.3 L452.4 224.8 L450.9 225.3 L449.2 225.7 L447.4 226.2 L445.4 226.6 L443.2 227.0 L440.9 227.4 L438.6 227.7 L436.1 228.0 L433.6 228.3 L431.1 228.5 L428.6 228.7 L426.0 228.8 L423.6 228.9 L421.2 229.0 L418.9 229.0 L416.7 228.9 L414.6 228.8 L412.7 228.7 L411.0 228.5 L409.5 228.2 L408.1 228.0 L407.0 227.6 L406.1 227.3 L405.5 226.9 L405.1 226.5 L404.9 226.1 L405.0 225.6 L405.3 225.2 L405.9 224.7 L406.7 224.2 L407.8 223.7 L409.1 223.2 L410.5 222.7 L412.2 222.3 L414.1 221.8 L416.1 221.4 L418.2 221.0 L420.5 220.6 L422.9 220.3 L425.3 220.0 L427.8 219.7 L430.4 219.5 L432.9 219.3 L435.4 219.2 L437.9 219.1 L440.3 219.0 L442.6 219.0 L444.8 219.1 L446.8 219.2 L448.7 219.3 L450.5 219.5 L452.0 219.8 L453.3 220.0 L454.4 220.4 L455.3 220.7 L456.0 221.1 L456.4 221.5ZM456.7 228.5 L456.6 228.9 L456.3 229.4 L455.7 229.8 L454.9 230.3 L453.8 230.8 L452.6 231.3 L451.1 231.7 L449.5 232.2 L447.7 232.6 L445.7 233.1 L443.5 233.5 L441.3 233.8 L439.0 234.2 L436.6 234.5 L434.1 234.7 L431.6 234.9 L429.1 235.1 L426.6 235.3 L424.2 235.3 L421.9 235.4 L419.6 235.4 L417.4 235.3 L415.4 235.2 L413.5 235.1 L411.8 234.9 L410.3 234.7 L409.0 234.4 L407.9 234.1 L407.0 233.7 L406.4 233.4 L406.0 233.0 L405.8 232.5 L405.9 232.1 L406.3 231.6 L406.8 231.2 L407.6 230.7 L408.7 230.2 L409.9 229.7 L411.4 229.3 L413.0 228.8 L414.9 228.4 L416.8 227.9 L419.0 227.5 L421.2 227.2 L423.5 226.8 L425.9 226.5 L428.4 226.3 L430.9 226.1 L433.4 225.9 L435.9 225.7 L438.3 225.7 L440.6 225.6 L442.9 225.6 L445.1 225.7 L447.1 225.8 L449.0 225.9 L450.7 226.1 L452.2 226.3 L453.5 226.6 L454.6 226.9 L455.5 227.3 L456.1 227.6 L456.5 228.0ZM457.4 234.9 L457.3 235.4 L457.0 235.9 L456.4 236.3 L455.6 236.8 L454.5 237.3 L453.3 237.8 L451.8 238.3 L450.1 238.7 L448.3 239.2 L446.3 239.6 L444.2 240.0 L441.9 240.4 L439.6 240.7 L437.1 241.0 L434.6 241.3 L432.1 241.5 L429.6 241.7 L427.1 241.8 L424.7 241.9 L422.3 241.9 L420.0 241.9 L417.8 241.9 L415.8 241.8 L413.9 241.6 L412.2 241.4 L410.7 241.2 L409.4 240.9 L408.2 240.6 L407.4 240.3 L406.7 239.9 L406.3 239.5 L406.2 239.1 L406.2 238.6 L406.6 238.1 L407.2 237.7 L408.0 237.2 L409.0 236.7 L410.3 236.2 L411.7 235.7 L413.4 235.3 L415.2 234.8 L417.2 234.4 L419.4 234.0 L421.6 233.6 L424.0 233.3 L426.4 233.0 L428.9 232.7 L431.4 232.5 L433.9 232.3 L436.4 232.2 L438.9 232.1 L441.2 232.1 L443.5 232.1 L445.7 232.1 L447.7 232.2 L449.6 232.4 L451.3 232.6 L452.9 232.8 L454.2 233.1 L455.3 233.4 L456.2 233.7 L456.8 234.1 L457.2 234.5ZM458.7 240.9 L458.6 241.3 L458.2 241.8 L457.6 242.3 L456.8 242.8 L455.7 243.3 L454.4 243.8 L452.9 244.3 L451.2 244.8 L449.3 245.2 L447.2 245.7 L445.0 246.1 L442.7 246.5 L440.3 246.8 L437.8 247.1 L435.2 247.4 L432.6 247.6 L430.0 247.8 L427.5 247.9 L424.9 248.0 L422.5 248.1 L420.1 248.1 L417.9 248.0 L415.8 247.9 L413.8 247.8 L412.1 247.6 L410.5 247.3 L409.1 247.1 L408.0 246.7 L407.1 246.4 L406.4 246.0 L406.0 245.6 L405.8 245.1 L405.9 244.7 L406.3 244.2 L406.9 243.7 L407.7 243.2 L408.8 242.7 L410.1 242.2 L411.6 241.7 L413.3 241.2 L415.2 240.8 L417.3 240.3 L419.5 239.9 L421.8 239.5 L424.2 239.2 L426.7 238.9 L429.3 238.6 L431.9 238.4 L434.5 238.2 L437.0 238.1 L439.6 238.0 L442.0 237.9 L444.4 237.9 L446.6 238.0 L448.7 238.1 L450.7 238.2 L452.4 238.4 L454.0 238.7 L455.4 238.9 L456.5 239.3 L457.4 239.6 L458.1 240.0 L458.5 240.4ZM460.4 246.8 L460.4 247.3 L460.0 247.8 L459.4 248.3 L458.5 248.8 L457.4 249.3 L456.0 249.8 L454.4 250.4 L452.6 250.9 L450.6 251.3 L448.5 251.8 L446.1 252.2 L443.7 252.6 L441.2 253.0 L438.5 253.3 L435.8 253.6 L433.1 253.8 L430.4 254.0 L427.7 254.2 L425.1 254.3 L422.5 254.3 L420.0 254.3 L417.7 254.3 L415.5 254.2 L413.4 254.0 L411.6 253.8 L409.9 253.5 L408.5 253.3 L407.3 252.9 L406.3 252.5 L405.6 252.1 L405.2 251.7 L405.0 251.2 L405.1 250.7 L405.5 250.2 L406.1 249.7 L407.0 249.2 L408.1 248.7 L409.5 248.2 L411.1 247.6 L412.9 247.1 L414.9 246.7 L417.0 246.2 L419.3 245.8 L421.8 245.4 L424.3 245.0 L427.0 244.7 L429.6 244.4 L432.3 244.2 L435.1 244.0 L437.8 243.8 L440.4 243.7 L443.0 243.7 L445.5 243.7 L447.8 243.7 L450.0 243.8 L452.1 244.0 L453.9 244.2 L455.6 244.5 L457.0 244.7 L458.2 245.1 L459.1 245.5 L459.8 245.9 L460.3 246.3ZM463.2 253.0 L463.1 253.5 L462.7 254.1 L462.0 254.6 L461.0 255.2 L459.8 255.7 L458.4 256.3 L456.6 256.9 L454.7 257.4 L452.5 257.9 L450.2 258.4 L447.7 258.9 L445.1 259.3 L442.3 259.7 L439.5 260.1 L436.6 260.4 L433.7 260.6 L430.7 260.8 L427.8 261.0 L425.0 261.1 L422.2 261.2 L419.5 261.1 L417.0 261.1 L414.6 261.0 L412.4 260.8 L410.4 260.6 L408.6 260.3 L407.1 260.0 L405.8 259.6 L404.8 259.2 L404.0 258.8 L403.5 258.3 L403.3 257.8 L403.5 257.3 L403.8 256.7 L404.5 256.2 L405.5 255.6 L406.7 255.1 L408.2 254.5 L409.9 253.9 L411.8 253.4 L414.0 252.9 L416.3 252.4 L418.8 251.9 L421.4 251.5 L424.2 251.1 L427.0 250.7 L429.9 250.4 L432.8 250.2 L435.8 250.0 L438.7 249.8 L441.5 249.7 L444.3 249.6 L447.0 249.7 L449.5 249.7 L451.9 249.8 L454.1 250.0 L456.1 250.2 L457.9 250.5 L459.4 250.8 L460.7 251.2 L461.7 251.6 L462.5 252.0 L463.0 252.5ZM467.7 259.3 L467.6 259.9 L467.1 260.5 L466.4 261.1 L465.3 261.8 L463.9 262.4 L462.2 263.0 L460.3 263.7 L458.1 264.3 L455.7 264.9 L453.0 265.4 L450.2 265.9 L447.2 266.4 L444.1 266.9 L440.9 267.3 L437.6 267.6 L434.3 267.9 L430.9 268.2 L427.6 268.3 L424.4 268.5 L421.3 268.5 L418.2 268.5 L415.4 268.4 L412.7 268.3 L410.2 268.1 L407.9 267.9 L405.9 267.6 L404.1 267.2 L402.7 266.8 L401.5 266.3 L400.6 265.8 L400.1 265.3 L399.9 264.7 L400.0 264.1 L400.5 263.5 L401.2 262.9 L402.3 262.2 L403.7 261.6 L405.3 261.0 L407.3 260.3 L409.5 259.7 L411.9 259.1 L414.6 258.6 L417.4 258.1 L420.4 257.6 L423.5 257.1 L426.7 256.7 L430.0 256.4 L433.3 256.1 L436.6 255.8 L439.9 255.7 L443.2 255.5 L446.3 255.5 L449.3 255.5 L452.2 255.6 L454.9 255.7 L457.4 255.9 L459.7 256.1 L461.7 256.4 L463.4 256.8 L464.9 257.2 L466.1 257.7 L466.9 258.2 L467.5 258.7ZM474.3 266.8 L474.2 267.5 L473.6 268.2 L472.7 269.0 L471.5 269.7 L469.9 270.5 L467.9 271.2 L465.6 271.9 L463.0 272.7 L460.2 273.4 L457.0 274.0 L453.7 274.6 L450.2 275.2 L446.5 275.7 L442.8 276.2 L438.9 276.6 L435.0 277.0 L431.1 277.3 L427.2 277.5 L423.4 277.6 L419.7 277.7 L416.1 277.7 L412.7 277.6 L409.6 277.4 L406.6 277.2 L404.0 276.9 L401.6 276.5 L399.5 276.1 L397.8 275.6 L396.4 275.1 L395.4 274.5 L394.8 273.9 L394.6 273.2 L394.7 272.5 L395.2 271.8 L396.1 271.0 L397.4 270.3 L399.0 269.5 L401.0 268.8 L403.3 268.1 L405.8 267.3 L408.7 266.6 L411.8 266.0 L415.1 265.4 L418.7 264.8 L422.3 264.3 L426.1 263.8 L430.0 263.4 L433.9 263.0 L437.8 262.7 L441.7 262.5 L445.5 262.4 L449.2 262.3 L452.7 262.3 L456.1 262.4 L459.3 262.6 L462.2 262.8 L464.9 263.1 L467.3 263.5 L469.3 263.9 L471.0 264.4 L472.4 264.9 L473.4 265.5 L474.1 266.1ZM483.5 275.1 L483.3 276.0 L482.7 276.8 L481.6 277.7 L480.1 278.6 L478.1 279.6 L475.7 280.5 L473.0 281.4 L469.8 282.2 L466.3 283.1 L462.6 283.9 L458.5 284.6 L454.3 285.3 L449.8 286.0 L445.2 286.5 L440.6 287.0 L435.8 287.5 L431.1 287.8 L426.4 288.1 L421.8 288.2 L417.3 288.3 L413.0 288.3 L408.9 288.2 L405.0 288.0 L401.4 287.7 L398.2 287.4 L395.3 286.9 L392.8 286.4 L390.7 285.8 L389.1 285.2 L387.9 284.5 L387.1 283.7 L386.8 282.9 L387.0 282.0 L387.6 281.2 L388.7 280.3 L390.2 279.4 L392.2 278.4 L394.6 277.5 L397.3 276.6 L400.5 275.8 L404.0 274.9 L407.7 274.1 L411.8 273.4 L416.0 272.7 L420.5 272.0 L425.1 271.5 L429.7 271.0 L434.5 270.5 L439.2 270.2 L443.9 269.9 L448.5 269.8 L453.0 269.7 L457.3 269.7 L461.4 269.8 L465.3 270.0 L468.9 270.3 L472.1 270.6 L475.0 271.1 L477.5 271.6 L479.6 272.2 L481.2 272.8 L482.4 273.5 L483.2 274.3ZM494.3 284.3 L494.1 285.3 L493.3 286.4 L492.0 287.5 L490.1 288.6 L487.8 289.7 L484.9 290.8 L481.6 291.9 L477.8 292.9 L473.6 293.9 L469.0 294.9 L464.2 295.8 L459.0 296.6 L453.7 297.4 L448.1 298.1 L442.5 298.7 L436.8 299.2 L431.1 299.6 L425.4 299.9 L419.8 300.1 L414.4 300.2 L409.2 300.2 L404.2 300.1 L399.6 299.9 L395.3 299.5 L391.4 299.1 L387.9 298.6 L384.9 297.9 L382.4 297.2 L380.4 296.4 L378.9 295.6 L378.0 294.7 L377.6 293.7 L377.8 292.7 L378.6 291.6 L379.9 290.5 L381.8 289.4 L384.1 288.3 L387.0 287.2 L390.4 286.1 L394.1 285.1 L398.3 284.1 L402.9 283.1 L407.7 282.2 L412.9 281.4 L418.2 280.6 L423.8 279.9 L429.4 279.3 L435.1 278.8 L440.9 278.4 L446.5 278.1 L452.1 277.9 L457.5 277.8 L462.7 277.8 L467.7 277.9 L472.3 278.1 L476.6 278.5 L480.5 278.9 L484.0 279.4 L487.0 280.1 L489.5 280.8 L491.5 281.6 L493.0 282.4 L493.9 283.3ZM505.1 294.5 L504.9 295.7 L504.0 296.9 L502.5 298.2 L500.3 299.5 L497.5 300.8 L494.1 302.1 L490.2 303.3 L485.8 304.6 L480.9 305.8 L475.6 306.9 L469.9 308.0 L463.9 308.9 L457.6 309.8 L451.1 310.6 L444.5 311.4 L437.8 311.9 L431.1 312.4 L424.5 312.8 L417.9 313.0 L411.6 313.1 L405.5 313.1 L399.7 313.0 L394.3 312.7 L389.2 312.3 L384.7 311.8 L380.6 311.2 L377.1 310.5 L374.1 309.6 L371.8 308.7 L370.1 307.7 L369.0 306.6 L368.6 305.5 L368.8 304.3 L369.7 303.1 L371.2 301.8 L373.4 300.5 L376.2 299.2 L379.5 297.9 L383.4 296.7 L387.9 295.4 L392.8 294.2 L398.1 293.1 L403.8 292.0 L409.8 291.1 L416.1 290.2 L422.6 289.4 L429.2 288.6 L435.9 288.1 L442.6 287.6 L449.2 287.2 L455.7 287.0 L462.1 286.9 L468.2 286.9 L474.0 287.0 L479.4 287.3 L484.4 287.7 L489.0 288.2 L493.1 288.8 L496.6 289.5 L499.6 290.4 L501.9 291.3 L503.6 292.3 L504.7 293.4ZM514.5 304.8 L514.2 306.2 L513.2 307.6 L511.5 309.0 L509.0 310.4 L505.9 311.9 L502.1 313.3 L497.7 314.8 L492.8 316.1 L487.2 317.5 L481.3 318.7 L474.9 319.9 L468.1 321.0 L461.0 322.1 L453.8 323.0 L446.3 323.8 L438.8 324.4 L431.3 325.0 L423.8 325.4 L416.5 325.6 L409.3 325.8 L402.5 325.8 L396.0 325.6 L389.9 325.3 L384.2 324.9 L379.1 324.3 L374.5 323.6 L370.5 322.8 L367.2 321.8 L364.6 320.8 L362.7 319.7 L361.4 318.5 L361.0 317.2 L361.2 315.8 L362.2 314.4 L364.0 313.0 L366.4 311.6 L369.5 310.1 L373.3 308.7 L377.7 307.2 L382.7 305.9 L388.2 304.5 L394.2 303.3 L400.6 302.1 L407.4 301.0 L414.4 299.9 L421.7 299.0 L429.1 298.2 L436.6 297.6 L444.2 297.0 L451.6 296.6 L459.0 296.4 L466.1 296.2 L473.0 296.2 L479.5 296.4 L485.6 296.7 L491.2 297.1 L496.4 297.7 L500.9 298.4 L504.9 299.2 L508.2 300.2 L510.9 301.2 L512.8 302.3 L514.0 303.5ZM520.3 315.4 L520.1 316.9 L519.0 318.3 L517.2 319.9 L514.6 321.4 L511.2 322.9 L507.2 324.5 L502.5 326.0 L497.2 327.5 L491.3 328.9 L485.0 330.2 L478.2 331.5 L470.9 332.7 L463.4 333.8 L455.7 334.7 L447.8 335.6 L439.8 336.3 L431.7 336.9 L423.8 337.3 L416.0 337.6 L408.4 337.7 L401.1 337.7 L394.2 337.5 L387.6 337.2 L381.6 336.8 L376.2 336.2 L371.3 335.4 L367.1 334.5 L363.5 333.5 L360.7 332.4 L358.7 331.2 L357.4 329.9 L356.9 328.6 L357.2 327.1 L358.2 325.7 L360.1 324.1 L362.7 322.6 L366.0 321.1 L370.0 319.5 L374.7 318.0 L380.0 316.5 L385.9 315.1 L392.2 313.8 L399.1 312.5 L406.3 311.3 L413.8 310.2 L421.5 309.3 L429.5 308.4 L437.5 307.7 L445.5 307.1 L453.4 306.7 L461.2 306.4 L468.8 306.3 L476.1 306.3 L483.1 306.5 L489.6 306.8 L495.6 307.2 L501.1 307.8 L505.9 308.6 L510.1 309.5 L513.7 310.5 L516.5 311.6 L518.5 312.8 L519.8 314.1ZM521.8 327.4 L521.5 328.8 L520.5 330.3 L518.6 331.9 L516.0 333.4 L512.6 335.0 L508.6 336.5 L503.9 338.0 L498.5 339.5 L492.6 340.9 L486.2 342.3 L479.4 343.6 L472.1 344.8 L464.5 345.9 L456.7 346.8 L448.8 347.7 L440.7 348.4 L432.7 349.0 L424.7 349.4 L416.8 349.7 L409.2 349.8 L401.8 349.8 L394.8 349.6 L388.3 349.3 L382.2 348.9 L376.7 348.2 L371.8 347.5 L367.6 346.6 L364.0 345.6 L361.2 344.5 L359.1 343.3 L357.8 342.0 L357.3 340.6 L357.6 339.2 L358.7 337.7 L360.5 336.1 L363.2 334.6 L366.5 333.0 L370.6 331.5 L375.3 330.0 L380.6 328.5 L386.5 327.1 L392.9 325.7 L399.8 324.4 L407.0 323.2 L414.6 322.1 L422.4 321.2 L430.4 320.3 L438.4 319.6 L446.5 319.0 L454.5 318.6 L462.3 318.3 L470.0 318.2 L477.3 318.2 L484.3 318.4 L490.8 318.7 L496.9 319.1 L502.4 319.8 L507.3 320.5 L511.6 321.4 L515.1 322.4 L517.9 323.5 L520.0 324.7 L521.3 326.0ZM496.1 502.6 L495.9 503.3 L495.4 504.1 L494.4 504.9 L493.1 505.7 L491.3 506.5 L489.2 507.3 L486.8 508.1 L484.0 508.9 L480.9 509.6 L477.6 510.3 L474.1 511.0 L470.3 511.6 L466.4 512.2 L462.3 512.7 L458.2 513.1 L454.0 513.5 L449.8 513.8 L445.7 514.0 L441.6 514.1 L437.6 514.2 L433.8 514.2 L430.2 514.1 L426.8 514.0 L423.6 513.7 L420.8 513.4 L418.2 513.0 L416.0 512.5 L414.2 512.0 L412.7 511.5 L411.6 510.8 L411.0 510.1 L410.7 509.4 L410.8 508.7 L411.4 507.9 L412.4 507.1 L413.7 506.3 L415.5 505.5 L417.6 504.7 L420.0 503.9 L422.8 503.1 L425.8 502.4 L429.2 501.7 L432.7 501.0 L436.5 500.4 L440.4 499.8 L444.5 499.3 L448.6 498.9 L452.8 498.5 L457.0 498.2 L461.1 498.0 L465.2 497.9 L469.2 497.8 L473.0 497.8 L476.6 497.9 L480.0 498.0 L483.2 498.3 L486.0 498.6 L488.6 499.0 L490.8 499.5 L492.6 500.0 L494.1 500.5 L495.2 501.2 L495.8 501.9ZM495.0 505.7 L494.9 506.4 L494.3 507.2 L493.4 507.9 L492.1 508.7 L490.4 509.5 L488.4 510.3 L486.0 511.0 L483.3 511.8 L480.3 512.5 L477.1 513.2 L473.7 513.8 L470.0 514.4 L466.2 515.0 L462.3 515.5 L458.3 515.9 L454.2 516.2 L450.2 516.5 L446.1 516.7 L442.2 516.9 L438.3 517.0 L434.7 517.0 L431.1 516.9 L427.8 516.7 L424.8 516.5 L422.0 516.2 L419.6 515.8 L417.4 515.3 L415.6 514.8 L414.2 514.3 L413.2 513.7 L412.5 513.0 L412.3 512.3 L412.4 511.6 L413.0 510.8 L413.9 510.1 L415.2 509.3 L416.9 508.5 L418.9 507.7 L421.3 507.0 L424.0 506.2 L426.9 505.5 L430.2 504.8 L433.6 504.2 L437.3 503.6 L441.1 503.0 L445.0 502.5 L449.0 502.1 L453.1 501.8 L457.1 501.5 L461.1 501.3 L465.1 501.1 L468.9 501.0 L472.6 501.0 L476.1 501.1 L479.4 501.3 L482.5 501.5 L485.2 501.8 L487.7 502.2 L489.8 502.7 L491.6 503.2 L493.1 503.7 L494.1 504.3 L494.7 505.0ZM493.3 508.3 L493.2 509.0 L492.7 509.7 L491.8 510.5 L490.5 511.2 L488.9 512.0 L487.0 512.7 L484.7 513.4 L482.1 514.1 L479.3 514.8 L476.2 515.5 L472.9 516.1 L469.5 516.7 L465.8 517.2 L462.1 517.7 L458.3 518.1 L454.4 518.4 L450.5 518.7 L446.7 518.9 L442.9 519.0 L439.2 519.1 L435.7 519.1 L432.4 519.0 L429.2 518.9 L426.3 518.6 L423.7 518.3 L421.3 518.0 L419.3 517.6 L417.6 517.1 L416.2 516.5 L415.2 516.0 L414.6 515.3 L414.4 514.7 L414.5 514.0 L415.0 513.3 L415.9 512.5 L417.2 511.8 L418.8 511.0 L420.7 510.3 L423.0 509.6 L425.5 508.9 L428.4 508.2 L431.5 507.5 L434.7 506.9 L438.2 506.3 L441.9 505.8 L445.6 505.3 L449.4 504.9 L453.3 504.6 L457.2 504.3 L461.0 504.1 L464.8 504.0 L468.4 503.9 L472.0 503.9 L475.3 504.0 L478.4 504.1 L481.4 504.4 L484.0 504.7 L486.3 505.0 L488.4 505.4 L490.1 505.9 L491.4 506.5 L492.4 507.0 L493.1 507.7ZM491.3 510.5 L491.1 511.2 L490.7 511.8 L489.8 512.5 L488.6 513.2 L487.1 513.9 L485.3 514.6 L483.1 515.3 L480.7 516.0 L478.0 516.6 L475.1 517.3 L472.0 517.8 L468.7 518.4 L465.3 518.9 L461.8 519.3 L458.2 519.7 L454.5 520.0 L450.9 520.3 L447.2 520.5 L443.7 520.6 L440.2 520.7 L436.9 520.7 L433.7 520.6 L430.8 520.4 L428.0 520.2 L425.5 520.0 L423.3 519.6 L421.4 519.2 L419.8 518.8 L418.5 518.3 L417.6 517.7 L417.0 517.1 L416.7 516.5 L416.9 515.8 L417.3 515.2 L418.2 514.5 L419.4 513.8 L420.9 513.1 L422.7 512.4 L424.9 511.7 L427.3 511.0 L430.0 510.4 L432.9 509.7 L436.0 509.2 L439.3 508.6 L442.7 508.1 L446.2 507.7 L449.8 507.3 L453.5 507.0 L457.1 506.7 L460.8 506.5 L464.3 506.4 L467.8 506.3 L471.1 506.3 L474.3 506.4 L477.2 506.6 L480.0 506.8 L482.5 507.0 L484.7 507.4 L486.6 507.8 L488.2 508.2 L489.5 508.7 L490.4 509.3 L491.0 509.9ZM489.1 512.2 L488.9 512.8 L488.5 513.4 L487.7 514.1 L486.6 514.7 L485.2 515.4 L483.5 516.1 L481.4 516.7 L479.2 517.3 L476.7 517.9 L473.9 518.5 L471.0 519.1 L467.9 519.6 L464.7 520.0 L461.4 520.5 L458.0 520.8 L454.6 521.1 L451.2 521.4 L447.8 521.5 L444.4 521.7 L441.2 521.7 L438.1 521.7 L435.1 521.6 L432.3 521.5 L429.8 521.3 L427.4 521.1 L425.3 520.7 L423.5 520.4 L422.0 519.9 L420.8 519.5 L419.9 518.9 L419.4 518.4 L419.2 517.8 L419.3 517.2 L419.7 516.6 L420.5 515.9 L421.6 515.3 L423.1 514.6 L424.8 513.9 L426.8 513.3 L429.1 512.7 L431.6 512.1 L434.3 511.5 L437.2 510.9 L440.3 510.4 L443.5 510.0 L446.8 509.5 L450.2 509.2 L453.6 508.9 L457.1 508.6 L460.5 508.5 L463.8 508.3 L467.0 508.3 L470.2 508.3 L473.1 508.4 L475.9 508.5 L478.5 508.7 L480.8 508.9 L482.9 509.3 L484.7 509.6 L486.2 510.1 L487.4 510.5 L488.3 511.1 L488.9 511.6ZM485.9 514.0 L485.7 514.5 L485.3 515.1 L484.6 515.7 L483.6 516.3 L482.3 516.9 L480.8 517.5 L479.0 518.0 L476.9 518.6 L474.6 519.2 L472.2 519.7 L469.5 520.2 L466.7 520.6 L463.8 521.1 L460.8 521.4 L457.8 521.8 L454.7 522.0 L451.6 522.3 L448.5 522.4 L445.5 522.5 L442.6 522.6 L439.7 522.6 L437.0 522.5 L434.5 522.4 L432.2 522.2 L430.1 522.0 L428.2 521.7 L426.6 521.3 L425.2 521.0 L424.1 520.5 L423.3 520.1 L422.8 519.6 L422.6 519.0 L422.7 518.5 L423.2 517.9 L423.9 517.3 L424.9 516.7 L426.2 516.1 L427.7 515.5 L429.5 515.0 L431.6 514.4 L433.8 513.8 L436.3 513.3 L438.9 512.8 L441.7 512.4 L444.6 511.9 L447.6 511.6 L450.7 511.2 L453.8 511.0 L456.9 510.7 L460.0 510.6 L463.0 510.5 L465.9 510.4 L468.7 510.4 L471.4 510.5 L474.0 510.6 L476.3 510.8 L478.4 511.0 L480.3 511.3 L481.9 511.7 L483.3 512.0 L484.4 512.5 L485.2 512.9 L485.7 513.4ZM480.6 515.9 L480.5 516.4 L480.1 516.8 L479.5 517.3 L478.7 517.8 L477.6 518.3 L476.4 518.8 L474.9 519.3 L473.2 519.8 L471.3 520.2 L469.2 520.6 L467.0 521.1 L464.7 521.4 L462.3 521.8 L459.8 522.1 L457.3 522.4 L454.7 522.6 L452.2 522.8 L449.6 522.9 L447.1 523.0 L444.7 523.0 L442.3 523.0 L440.1 523.0 L438.0 522.9 L436.1 522.7 L434.3 522.5 L432.8 522.3 L431.4 522.0 L430.3 521.7 L429.4 521.3 L428.7 521.0 L428.3 520.5 L428.2 520.1 L428.2 519.6 L428.6 519.2 L429.2 518.7 L430.0 518.2 L431.1 517.7 L432.4 517.2 L433.9 516.7 L435.6 516.2 L437.5 515.8 L439.5 515.4 L441.7 514.9 L444.0 514.6 L446.4 514.2 L448.9 513.9 L451.4 513.6 L454.0 513.4 L456.6 513.2 L459.1 513.1 L461.6 513.0 L464.1 513.0 L466.4 513.0 L468.6 513.0 L470.7 513.1 L472.6 513.3 L474.4 513.5 L475.9 513.7 L477.3 514.0 L478.4 514.3 L479.3 514.7 L480.0 515.0 L480.4 515.5ZM473.7 517.8 L473.7 518.1 L473.4 518.4 L473.0 518.8 L472.4 519.2 L471.6 519.5 L470.6 519.9 L469.5 520.2 L468.3 520.6 L466.9 520.9 L465.4 521.2 L463.8 521.5 L462.1 521.8 L460.3 522.1 L458.5 522.3 L456.6 522.5 L454.7 522.7 L452.8 522.8 L451.0 522.9 L449.1 523.0 L447.3 523.0 L445.6 523.0 L444.0 523.0 L442.5 522.9 L441.0 522.8 L439.8 522.6 L438.6 522.5 L437.6 522.3 L436.8 522.0 L436.1 521.8 L435.6 521.5 L435.3 521.2 L435.2 520.8 L435.3 520.5 L435.5 520.2 L436.0 519.8 L436.6 519.4 L437.4 519.1 L438.3 518.7 L439.4 518.4 L440.7 518.0 L442.0 517.7 L443.5 517.4 L445.1 517.1 L446.8 516.8 L448.6 516.5 L450.4 516.3 L452.3 516.1 L454.2 515.9 L456.1 515.8 L458.0 515.7 L459.8 515.6 L461.6 515.6 L463.3 515.6 L464.9 515.6 L466.5 515.7 L467.9 515.8 L469.2 516.0 L470.3 516.1 L471.3 516.3 L472.2 516.6 L472.8 516.8 L473.3 517.1 L473.6 517.4ZM464.5 519.7 L464.5 519.9 L464.4 520.1 L464.1 520.2 L463.8 520.4 L463.4 520.6 L462.9 520.8 L462.4 521.0 L461.7 521.2 L461.0 521.3 L460.2 521.5 L459.4 521.7 L458.5 521.8 L457.6 521.9 L456.6 522.1 L455.7 522.2 L454.7 522.2 L453.7 522.3 L452.8 522.4 L451.8 522.4 L450.9 522.4 L450.0 522.4 L449.1 522.4 L448.3 522.4 L447.6 522.3 L446.9 522.2 L446.4 522.1 L445.8 522.0 L445.4 521.9 L445.1 521.8 L444.8 521.6 L444.7 521.5 L444.6 521.3 L444.6 521.1 L444.8 520.9 L445.0 520.8 L445.3 520.6 L445.7 520.4 L446.2 520.2 L446.8 520.0 L447.4 519.8 L448.1 519.7 L448.9 519.5 L449.7 519.3 L450.6 519.2 L451.5 519.1 L452.5 518.9 L453.4 518.8 L454.4 518.8 L455.4 518.7 L456.4 518.6 L457.3 518.6 L458.2 518.6 L459.1 518.6 L460.0 518.6 L460.8 518.6 L461.5 518.7 L462.2 518.8 L462.8 518.9 L463.3 519.0 L463.7 519.1 L464.1 519.2 L464.3 519.4 L464.5 519.5Z" fill="none" stroke="#141414" stroke-width="1.100" stroke-opacity="0.900"/><path d="M521.3 345.5 L521.0 347.0 L519.9 348.4 L518.1 349.9 L515.6 351.4 L512.3 352.9 L508.4 354.4 L503.8 355.9 L498.6 357.4 L492.8 358.8 L486.5 360.1 L479.8 361.3 L472.8 362.5 L465.4 363.6 L457.8 364.5 L450.0 365.3 L442.1 366.0 L434.3 366.6 L426.5 367.0 L418.8 367.3 L411.3 367.4 L404.2 367.4 L397.4 367.3 L391.0 366.9 L385.1 366.5 L379.7 365.9 L374.9 365.2 L370.8 364.3 L367.3 363.3 L364.5 362.2 L362.5 361.1 L361.3 359.8 L360.8 358.5 L361.0 357.0 L362.1 355.6 L363.9 354.1 L366.4 352.6 L369.7 351.1 L373.7 349.6 L378.3 348.1 L383.5 346.6 L389.2 345.2 L395.5 343.9 L402.2 342.7 L409.3 341.5 L416.6 340.4 L424.3 339.5 L432.0 338.7 L439.9 338.0 L447.8 337.4 L455.6 337.0 L463.2 336.7 L470.7 336.6 L477.9 336.6 L484.7 336.7 L491.1 337.1 L497.0 337.5 L502.3 338.1 L507.1 338.8 L511.3 339.7 L514.7 340.7 L517.5 341.8 L519.5 342.9 L520.8 344.2ZM517.5 380.1 L517.3 381.4 L516.3 382.7 L514.6 384.1 L512.3 385.5 L509.3 386.9 L505.7 388.2 L501.4 389.6 L496.6 390.9 L491.3 392.2 L485.6 393.4 L479.4 394.6 L472.9 395.7 L466.2 396.6 L459.2 397.5 L452.0 398.3 L444.8 398.9 L437.6 399.4 L430.4 399.8 L423.3 400.1 L416.5 400.2 L409.9 400.2 L403.6 400.0 L397.8 399.7 L392.3 399.3 L387.4 398.8 L383.0 398.1 L379.2 397.3 L376.0 396.4 L373.5 395.4 L371.6 394.3 L370.4 393.2 L370.0 391.9 L370.2 390.6 L371.2 389.3 L372.9 387.9 L375.2 386.5 L378.2 385.1 L381.8 383.8 L386.1 382.4 L390.9 381.1 L396.2 379.8 L401.9 378.6 L408.1 377.4 L414.6 376.3 L421.3 375.4 L428.3 374.5 L435.5 373.7 L442.7 373.1 L449.9 372.6 L457.1 372.2 L464.2 371.9 L471.0 371.8 L477.6 371.8 L483.9 372.0 L489.7 372.3 L495.2 372.7 L500.1 373.2 L504.5 373.9 L508.3 374.7 L511.5 375.6 L514.0 376.6 L515.9 377.7 L517.1 378.8ZM512.3 414.7 L512.1 415.9 L511.2 417.1 L509.8 418.3 L507.7 419.5 L505.0 420.8 L501.8 422.0 L498.0 423.2 L493.7 424.4 L489.0 425.6 L483.8 426.6 L478.3 427.7 L472.5 428.6 L466.5 429.5 L460.2 430.3 L453.9 430.9 L447.4 431.5 L441.0 432.0 L434.5 432.3 L428.3 432.6 L422.1 432.7 L416.3 432.7 L410.7 432.5 L405.4 432.3 L400.6 431.9 L396.2 431.4 L392.2 430.8 L388.8 430.1 L386.0 429.3 L383.7 428.4 L382.1 427.4 L381.0 426.4 L380.6 425.3 L380.9 424.1 L381.7 422.9 L383.2 421.7 L385.3 420.5 L388.0 419.2 L391.2 418.0 L395.0 416.8 L399.3 415.6 L404.0 414.4 L409.1 413.4 L414.6 412.3 L420.4 411.4 L426.5 410.5 L432.7 409.7 L439.1 409.1 L445.6 408.5 L452.0 408.0 L458.4 407.7 L464.7 407.4 L470.8 407.3 L476.7 407.3 L482.3 407.5 L487.5 407.7 L492.4 408.1 L496.8 408.6 L500.7 409.2 L504.1 409.9 L507.0 410.7 L509.2 411.6 L510.9 412.6 L511.9 413.6ZM506.4 447.4 L506.2 448.4 L505.4 449.4 L504.1 450.5 L502.3 451.6 L500.0 452.7 L497.2 453.7 L493.9 454.8 L490.2 455.8 L486.0 456.8 L481.6 457.8 L476.8 458.7 L471.7 459.5 L466.5 460.3 L461.0 460.9 L455.5 461.5 L449.9 462.0 L444.2 462.4 L438.7 462.7 L433.2 462.9 L427.9 463.0 L422.7 463.0 L417.9 462.9 L413.3 462.7 L409.1 462.4 L405.3 461.9 L401.8 461.4 L398.9 460.8 L396.4 460.1 L394.4 459.3 L393.0 458.5 L392.1 457.6 L391.7 456.6 L391.9 455.6 L392.7 454.6 L394.0 453.5 L395.8 452.4 L398.1 451.3 L401.0 450.3 L404.2 449.2 L408.0 448.2 L412.1 447.2 L416.5 446.2 L421.3 445.3 L426.4 444.5 L431.6 443.7 L437.1 443.1 L442.6 442.5 L448.3 442.0 L453.9 441.6 L459.4 441.3 L464.9 441.1 L470.2 441.0 L475.4 441.0 L480.2 441.1 L484.8 441.3 L489.0 441.6 L492.9 442.1 L496.3 442.6 L499.2 443.2 L501.7 443.9 L503.7 444.7 L505.1 445.5 L506.0 446.4ZM501.0 476.0 L500.8 476.9 L500.1 477.8 L499.0 478.7 L497.5 479.6 L495.4 480.6 L493.0 481.5 L490.1 482.4 L486.9 483.3 L483.4 484.2 L479.5 485.0 L475.3 485.8 L471.0 486.5 L466.4 487.2 L461.7 487.7 L456.9 488.3 L452.0 488.7 L447.1 489.0 L442.3 489.3 L437.6 489.5 L432.9 489.6 L428.5 489.5 L424.3 489.4 L420.3 489.2 L416.7 489.0 L413.4 488.6 L410.4 488.1 L407.8 487.6 L405.7 487.0 L404.0 486.3 L402.7 485.6 L402.0 484.8 L401.6 484.0 L401.8 483.1 L402.5 482.2 L403.6 481.3 L405.2 480.4 L407.2 479.4 L409.6 478.5 L412.5 477.6 L415.7 476.7 L419.3 475.8 L423.1 475.0 L427.3 474.2 L431.7 473.5 L436.2 472.8 L440.9 472.3 L445.7 471.7 L450.6 471.3 L455.5 471.0 L460.3 470.7 L465.1 470.5 L469.7 470.4 L474.1 470.5 L478.3 470.6 L482.3 470.8 L485.9 471.0 L489.3 471.4 L492.2 471.9 L494.8 472.4 L496.9 473.0 L498.6 473.7 L499.9 474.4 L500.7 475.2ZM497.5 495.4 L497.4 496.2 L496.8 497.0 L495.8 497.8 L494.4 498.7 L492.6 499.5 L490.4 500.4 L487.8 501.2 L484.9 502.0 L481.7 502.8 L478.2 503.5 L474.5 504.2 L470.5 504.9 L466.4 505.4 L462.2 506.0 L457.8 506.4 L453.5 506.8 L449.1 507.1 L444.7 507.4 L440.5 507.5 L436.3 507.6 L432.3 507.6 L428.5 507.5 L425.0 507.3 L421.7 507.1 L418.7 506.7 L416.0 506.3 L413.7 505.9 L411.8 505.3 L410.2 504.7 L409.1 504.1 L408.4 503.3 L408.1 502.6 L408.3 501.8 L408.9 501.0 L409.9 500.2 L411.3 499.3 L413.1 498.5 L415.3 497.6 L417.9 496.8 L420.8 496.0 L424.0 495.2 L427.5 494.5 L431.2 493.8 L435.1 493.1 L439.3 492.6 L443.5 492.0 L447.8 491.6 L452.2 491.2 L456.6 490.9 L460.9 490.6 L465.2 490.5 L469.4 490.4 L473.4 490.4 L477.1 490.5 L480.7 490.7 L484.0 490.9 L487.0 491.3 L489.7 491.7 L492.0 492.1 L493.9 492.7 L495.4 493.3 L496.6 493.9 L497.3 494.7ZM471.2 141.2 L471.1 142.1 L470.5 142.9 L469.4 143.8 L467.9 144.7 L466.0 145.5 L463.7 146.4 L461.0 147.3 L458.0 148.1 L454.6 148.9 L451.0 149.7 L447.0 150.5 L442.9 151.1 L438.6 151.8 L434.2 152.3 L429.6 152.8 L425.0 153.2 L420.4 153.5 L415.9 153.8 L411.4 153.9 L407.1 154.0 L402.9 154.0 L398.9 153.9 L395.2 153.7 L391.7 153.5 L388.6 153.1 L385.8 152.7 L383.4 152.2 L381.3 151.6 L379.7 151.0 L378.6 150.3 L377.8 149.6 L377.5 148.8 L377.7 147.9 L378.3 147.1 L379.4 146.2 L380.8 145.3 L382.8 144.5 L385.1 143.6 L387.7 142.7 L390.8 141.9 L394.1 141.1 L397.8 140.3 L401.7 139.5 L405.8 138.9 L410.1 138.2 L414.6 137.7 L419.1 137.2 L423.7 136.8 L428.3 136.5 L432.9 136.2 L437.3 136.1 L441.7 136.0 L445.9 136.0 L449.9 136.1 L453.6 136.3 L457.0 136.5 L460.2 136.9 L463.0 137.3 L465.4 137.8 L467.4 138.4 L469.0 139.0 L470.2 139.7 L470.9 140.4ZM469.4 143.4 L469.2 144.2 L468.7 145.0 L467.6 145.8 L466.2 146.7 L464.4 147.5 L462.2 148.4 L459.6 149.2 L456.7 150.0 L453.5 150.8 L450.0 151.5 L446.2 152.2 L442.3 152.9 L438.2 153.5 L433.9 154.0 L429.6 154.5 L425.2 154.8 L420.8 155.2 L416.4 155.4 L412.1 155.6 L408.0 155.6 L404.0 155.6 L400.1 155.5 L396.6 155.4 L393.3 155.1 L390.3 154.8 L387.6 154.4 L385.3 153.9 L383.3 153.3 L381.8 152.7 L380.7 152.1 L380.0 151.4 L379.7 150.6 L379.8 149.8 L380.4 149.0 L381.4 148.2 L382.9 147.3 L384.7 146.5 L386.9 145.6 L389.5 144.8 L392.4 144.0 L395.6 143.2 L399.1 142.5 L402.8 141.8 L406.8 141.1 L410.9 140.5 L415.2 140.0 L419.5 139.5 L423.9 139.2 L428.3 138.8 L432.7 138.6 L437.0 138.4 L441.1 138.4 L445.1 138.4 L448.9 138.5 L452.5 138.6 L455.8 138.9 L458.8 139.2 L461.5 139.6 L463.8 140.1 L465.7 140.7 L467.3 141.3 L468.4 141.9 L469.1 142.6ZM484.0 512.1 L483.9 512.6 L483.5 513.2 L482.8 513.7 L481.9 514.3 L480.7 514.8 L479.2 515.4 L477.5 516.0 L475.5 516.5 L473.4 517.0 L471.0 517.5 L468.5 518.0 L465.9 518.4 L463.2 518.8 L460.3 519.2 L457.4 519.5 L454.5 519.7 L451.6 519.9 L448.7 520.1 L445.8 520.2 L443.0 520.3 L440.4 520.2 L437.8 520.2 L435.4 520.1 L433.2 519.9 L431.2 519.7 L429.5 519.4 L427.9 519.1 L426.6 518.7 L425.6 518.3 L424.8 517.9 L424.4 517.4 L424.2 516.9 L424.3 516.4 L424.7 515.8 L425.3 515.3 L426.3 514.7 L427.5 514.2 L429.0 513.6 L430.7 513.0 L432.6 512.5 L434.8 512.0 L437.1 511.5 L439.6 511.0 L442.2 510.6 L445.0 510.2 L447.8 509.8 L450.7 509.5 L453.7 509.3 L456.6 509.1 L459.5 508.9 L462.4 508.8 L465.1 508.7 L467.8 508.8 L470.3 508.8 L472.7 508.9 L474.9 509.1 L476.9 509.3 L478.7 509.6 L480.3 509.9 L481.5 510.3 L482.6 510.7 L483.3 511.1 L483.8 511.6ZM476.1 514.2 L476.1 514.6 L475.8 515.0 L475.3 515.4 L474.6 515.8 L473.7 516.3 L472.6 516.7 L471.3 517.1 L469.9 517.5 L468.4 517.8 L466.6 518.2 L464.8 518.6 L462.9 518.9 L460.9 519.2 L458.8 519.4 L456.7 519.6 L454.5 519.8 L452.4 520.0 L450.2 520.1 L448.1 520.2 L446.1 520.2 L444.1 520.2 L442.3 520.2 L440.5 520.1 L438.9 520.0 L437.4 519.8 L436.1 519.6 L435.0 519.4 L434.1 519.1 L433.3 518.8 L432.8 518.5 L432.4 518.1 L432.3 517.8 L432.3 517.4 L432.6 517.0 L433.1 516.6 L433.8 516.2 L434.7 515.7 L435.8 515.3 L437.1 514.9 L438.5 514.5 L440.1 514.2 L441.8 513.8 L443.6 513.4 L445.5 513.1 L447.5 512.8 L449.6 512.6 L451.7 512.4 L453.9 512.2 L456.0 512.0 L458.2 511.9 L460.3 511.8 L462.3 511.8 L464.3 511.8 L466.1 511.8 L467.9 511.9 L469.5 512.0 L471.0 512.2 L472.3 512.4 L473.4 512.6 L474.3 512.9 L475.1 513.2 L475.6 513.5 L476.0 513.9ZM467.2 516.0 L467.2 516.2 L467.0 516.4 L466.7 516.7 L466.3 516.9 L465.8 517.2 L465.2 517.4 L464.4 517.6 L463.6 517.9 L462.6 518.1 L461.6 518.3 L460.6 518.5 L459.4 518.7 L458.2 518.9 L457.0 519.0 L455.7 519.2 L454.5 519.3 L453.2 519.4 L451.9 519.4 L450.7 519.5 L449.5 519.5 L448.3 519.5 L447.2 519.5 L446.2 519.4 L445.2 519.3 L444.4 519.2 L443.6 519.1 L442.9 519.0 L442.4 518.8 L441.9 518.7 L441.6 518.5 L441.4 518.3 L441.3 518.0 L441.4 517.8 L441.5 517.6 L441.8 517.3 L442.2 517.1 L442.8 516.8 L443.4 516.6 L444.1 516.4 L445.0 516.1 L445.9 515.9 L446.9 515.7 L448.0 515.5 L449.2 515.3 L450.3 515.1 L451.6 515.0 L452.8 514.8 L454.1 514.7 L455.4 514.6 L456.6 514.6 L457.9 514.5 L459.1 514.5 L460.2 514.5 L461.3 514.5 L462.4 514.6 L463.3 514.7 L464.2 514.8 L465.0 514.9 L465.6 515.0 L466.2 515.2 L466.6 515.3 L467.0 515.5 L467.2 515.7Z" fill="none" stroke="#1a1a1a" stroke-width="1" stroke-opacity="0.720"/><path d="M473.1 139.1 L477.8 140.5 L478.2 142.2 L478.4 144.0 L478.6 145.7 L478.8 147.5 L478.9 149.3 L479.0 151.0 L479.2 152.8 L479.3 154.6 L479.3 156.3 L479.3 158.1 L479.2 159.9 L478.3 161.7 L476.8 163.6 L475.6 165.5 L474.4 167.4 L473.2 169.2 L472.0 171.1 L470.8 173.0 L469.7 174.9 L468.8 176.7 L467.9 178.5 L467.1 180.4 L466.3 182.2 L465.6 184.1 L465.0 185.9 L464.3 187.7 L463.7 189.5 L463.1 191.4 L462.4 193.2 L461.8 195.0 L461.2 196.8 L460.7 198.7 L460.1 200.5 L459.6 202.3 L459.1 204.1 L458.7 205.9 L458.3 207.7 L457.9 209.5 L457.7 211.3 L457.4 213.1 L457.2 214.9 L457.0 216.7 L456.8 218.5 L456.6 220.3 L456.5 222.1 L456.5 223.8 L456.5 225.6 L456.6 227.4 L456.7 229.2 L456.9 230.9 L457.1 232.7 L457.3 234.4 L457.6 236.2 L458.0 237.9 L458.4 239.7 L458.8 241.4 L459.3 243.2 L459.8 244.9 L460.4 246.6 L461.0 248.3 L461.7 250.1 L462.5 251.8 L463.4 253.5 L464.5 255.2 L465.8 256.8 L467.1 258.5 L468.4 260.2 L469.8 261.8 L471.2 263.5 L472.7 265.2 L474.3 266.8 L476.0 268.4 L477.7 270.1 L479.6 271.7 L481.5 273.3 L483.3 275.0 L485.2 276.6 L487.1 278.2 L489.0 279.8 L491.0 281.4 L492.9 283.1 L494.7 284.7 L496.5 286.3 L498.3 288.0 L500.1 289.6 L501.8 291.2 L503.5 292.9 L505.1 294.5 L507.0 296.4 L509.9 299.3 L512.5 302.3 L514.8 305.3 L516.9 308.3 L518.8 311.4 L520.1 314.4 L520.7 317.6 L521.1 320.7 L521.5 323.9 L521.8 327.1 L521.9 330.2 L521.9 333.4 L521.7 336.6 L521.5 339.8 L521.4 343.0 L521.2 346.2 L521.1 349.4 L520.9 352.6 L520.7 355.8 L520.5 359.0 L520.1 362.2 L519.7 365.5 L519.3 368.7 L518.8 371.9 L518.3 375.1 L517.8 378.4 L517.3 381.6 L516.8 384.8 L516.4 388.0 L515.9 391.3 L515.5 394.5 L515.0 397.7 L514.5 400.9 L514.0 404.2 L513.5 407.4 L513.0 410.6 L512.5 413.9 L511.9 417.1 L511.4 420.3 L510.8 423.6 L510.3 426.8 L509.7 430.0 L509.1 433.3 L508.4 436.5 L507.8 439.7 L507.2 443.0 L506.6 446.2 L506.0 449.4 L505.4 452.7 L504.8 455.9 L504.2 459.1 L503.6 462.4 L503.0 465.6 L502.4 468.9 L501.7 472.1 L501.1 475.3 L500.5 478.6 L499.8 481.8 L499.2 485.0 L498.6 488.3 L498.1 491.5 L497.6 494.7 L497.1 498.0 L496.4 501.2 L495.5 504.5 L493.7 507.8 L490.4 511.2 L483.2 515.0 L464.5 519.7M466.9 143.9 L471.1 145.7 L471.4 147.5 L471.6 149.3 L471.8 151.0 L471.9 152.8 L472.1 154.5 L472.2 156.3 L472.3 158.1 L472.5 159.8 L472.5 161.6 L472.5 163.4 L472.5 165.1 L471.6 166.9 L470.4 168.6 L469.3 170.3 L468.3 172.1 L467.3 173.8 L466.3 175.6 L465.2 177.3 L464.3 179.0 L463.5 180.8 L462.8 182.5 L462.1 184.3 L461.4 186.0 L460.8 187.8 L460.3 189.5 L459.7 191.3 L459.2 193.0 L458.6 194.8 L458.1 196.5 L457.6 198.3 L457.1 200.0 L456.6 201.8 L456.2 203.5 L455.7 205.3 L455.3 207.0 L455.0 208.8 L454.6 210.5 L454.4 212.3 L454.1 214.1 L453.9 215.8 L453.7 217.6 L453.6 219.3 L453.4 221.1 L453.3 222.8 L453.3 224.6 L453.3 226.4 L453.3 228.1 L453.4 229.9 L453.5 231.7 L453.7 233.4 L453.9 235.2 L454.1 237.0 L454.3 238.7 L454.7 240.5 L455.0 242.3 L455.4 244.0 L455.9 245.8 L456.4 247.6 L456.9 249.3 L457.5 251.1 L458.1 252.9 L458.8 254.7 L459.6 256.4 L460.6 258.2 L461.7 260.0 L462.8 261.8 L464.0 263.6 L465.2 265.4 L466.5 267.1 L467.9 268.9 L469.2 270.7 L470.7 272.5 L472.3 274.3 L473.9 276.1 L475.6 277.9 L477.2 279.7 L478.9 281.5 L480.5 283.3 L482.2 285.1 L483.9 286.9 L485.6 288.7 L487.2 290.5 L488.8 292.3 L490.4 294.1 L492.0 295.8 L493.5 297.6 L495.0 299.4 L496.5 301.2 L498.1 303.3 L500.6 306.5 L503.0 309.7 L505.0 312.9 L506.9 316.1 L508.6 319.3 L509.8 322.5 L510.3 325.6 L510.7 328.8 L511.0 332.0 L511.3 335.1 L511.5 338.3 L511.5 341.5 L511.4 344.6 L511.2 347.8 L511.2 350.9 L511.1 354.1 L511.0 357.3 L510.8 360.4 L510.7 363.6 L510.5 366.7 L510.3 369.9 L509.9 373.0 L509.6 376.2 L509.2 379.4 L508.8 382.5 L508.3 385.7 L508.0 388.8 L507.6 392.0 L507.3 395.1 L506.9 398.3 L506.5 401.4 L506.1 404.6 L505.8 407.7 L505.4 410.9 L504.9 414.0 L504.5 417.2 L504.1 420.3 L503.6 423.5 L503.2 426.7 L502.7 429.8 L502.3 433.0 L501.8 436.1 L501.3 439.3 L500.8 442.4 L500.3 445.6 L499.8 448.7 L499.3 451.9 L498.8 455.0 L498.3 458.2 L497.8 461.3 L497.3 464.5 L496.8 467.6 L496.3 470.8 L495.8 473.9 L495.3 477.1 L494.8 480.2 L494.2 483.4 L493.7 486.5 L493.2 489.7 L492.7 492.8 L492.3 496.0 L491.9 499.1 L491.5 502.3 L491.0 505.4 L490.2 508.6 L488.7 511.7 L485.8 514.8 L479.5 517.9 L463.3 520.7M449.2 148.4 L451.8 150.7 L452.0 152.5 L452.2 154.3 L452.4 156.1 L452.5 157.8 L452.6 159.6 L452.8 161.3 L452.9 163.1 L453.0 164.9 L453.1 166.6 L453.2 168.4 L453.2 170.1 L452.8 171.7 L452.1 173.3 L451.6 174.9 L451.0 176.6 L450.5 178.2 L449.9 179.8 L449.4 181.4 L448.9 183.0 L448.5 184.7 L448.1 186.3 L447.8 188.0 L447.4 189.6 L447.2 191.3 L446.9 193.0 L446.6 194.7 L446.4 196.3 L446.1 198.0 L445.9 199.7 L445.6 201.4 L445.4 203.1 L445.2 204.8 L445.0 206.4 L444.8 208.1 L444.6 209.8 L444.4 211.5 L444.3 213.2 L444.2 214.9 L444.1 216.7 L444.0 218.4 L444.0 220.1 L444.0 221.8 L443.9 223.5 L443.9 225.3 L444.0 227.0 L444.0 228.8 L444.1 230.5 L444.2 232.3 L444.3 234.0 L444.5 235.8 L444.7 237.6 L444.8 239.3 L445.0 241.1 L445.3 242.9 L445.6 244.7 L445.9 246.5 L446.2 248.3 L446.5 250.1 L446.9 251.9 L447.3 253.7 L447.7 255.6 L448.2 257.4 L448.7 259.3 L449.4 261.1 L450.1 263.0 L450.8 264.9 L451.5 266.8 L452.3 268.7 L453.1 270.6 L454.0 272.5 L454.9 274.5 L455.8 276.4 L456.8 278.3 L457.8 280.3 L458.8 282.2 L459.8 284.2 L460.8 286.2 L461.9 288.1 L463.0 290.1 L464.0 292.0 L465.0 294.0 L466.1 296.0 L467.1 297.9 L468.0 299.9 L469.0 301.8 L470.0 303.7 L470.9 305.7 L471.8 307.6 L472.8 309.8 L474.4 313.3 L475.9 316.7 L477.2 320.1 L478.4 323.5 L479.5 326.8 L480.3 330.1 L480.7 333.3 L481.1 336.5 L481.4 339.7 L481.7 342.8 L481.9 346.0 L482.0 349.1 L482.0 352.2 L482.0 355.3 L482.1 358.5 L482.1 361.6 L482.2 364.7 L482.2 367.8 L482.2 370.9 L482.2 374.1 L482.2 377.2 L482.1 380.3 L482.0 383.3 L481.9 386.4 L481.7 389.5 L481.6 392.6 L481.5 395.7 L481.4 398.8 L481.3 401.9 L481.2 404.9 L481.0 408.0 L480.9 411.1 L480.8 414.2 L480.7 417.3 L480.5 420.4 L480.4 423.4 L480.3 426.5 L480.1 429.6 L479.9 432.7 L479.8 435.8 L479.6 438.8 L479.4 441.9 L479.2 445.0 L479.1 448.0 L478.9 451.1 L478.7 454.2 L478.5 457.3 L478.3 460.3 L478.1 463.4 L477.9 466.5 L477.7 469.5 L477.6 472.6 L477.4 475.7 L477.2 478.7 L477.0 481.8 L476.8 484.9 L476.6 488.0 L476.4 491.0 L476.2 494.1 L476.0 497.2 L475.9 500.2 L475.8 503.3 L475.6 506.4 L475.4 509.5 L475.0 512.5 L474.2 515.4 L472.7 518.2 L469.1 520.6 L459.7 521.6M424.9 151.5 L425.1 154.1 L425.3 155.9 L425.4 157.7 L425.5 159.5 L425.7 161.2 L425.8 163.0 L426.0 164.8 L426.1 166.5 L426.3 168.3 L426.4 170.0 L426.5 171.8 L426.7 173.5 L426.8 175.1 L426.9 176.5 L427.0 178.1 L427.2 179.6 L427.3 181.1 L427.4 182.7 L427.5 184.2 L427.7 185.8 L427.8 187.3 L427.9 188.9 L428.0 190.5 L428.2 192.1 L428.3 193.7 L428.4 195.3 L428.6 197.0 L428.7 198.6 L428.8 200.2 L429.0 201.9 L429.1 203.5 L429.2 205.1 L429.3 206.8 L429.5 208.4 L429.6 210.1 L429.7 211.7 L429.9 213.4 L430.0 215.1 L430.1 216.7 L430.3 218.4 L430.4 220.1 L430.6 221.8 L430.7 223.5 L430.8 225.2 L431.0 226.9 L431.1 228.7 L431.2 230.4 L431.4 232.1 L431.5 233.9 L431.7 235.7 L431.8 237.4 L432.0 239.2 L432.1 241.0 L432.2 242.8 L432.4 244.6 L432.5 246.4 L432.7 248.2 L432.8 250.0 L433.0 251.8 L433.1 253.7 L433.3 255.5 L433.4 257.4 L433.6 259.3 L433.7 261.2 L433.9 263.1 L434.0 265.1 L434.2 267.0 L434.3 269.0 L434.5 271.0 L434.7 273.0 L434.8 275.0 L435.0 277.0 L435.2 279.0 L435.3 281.1 L435.5 283.1 L435.6 285.2 L435.8 287.3 L436.0 289.3 L436.1 291.4 L436.3 293.5 L436.5 295.6 L436.6 297.6 L436.8 299.7 L437.0 301.7 L437.1 303.8 L437.3 305.8 L437.5 307.9 L437.6 309.9 L437.8 311.9 L438.0 314.2 L438.3 317.9 L438.6 321.5 L438.8 325.0 L439.1 328.5 L439.4 331.9 L439.7 335.3 L439.9 338.5 L440.2 341.7 L440.4 344.9 L440.7 348.1 L441.0 351.2 L441.2 354.3 L441.5 357.4 L441.7 360.5 L442.0 363.6 L442.2 366.7 L442.4 369.8 L442.7 372.9 L442.9 376.0 L443.2 379.0 L443.4 382.1 L443.7 385.2 L443.9 388.2 L444.2 391.2 L444.4 394.3 L444.7 397.3 L444.9 400.3 L445.1 403.4 L445.4 406.4 L445.6 409.5 L445.9 412.5 L446.1 415.6 L446.4 418.6 L446.6 421.6 L446.9 424.7 L447.1 427.7 L447.3 430.7 L447.6 433.8 L447.8 436.8 L448.1 439.8 L448.3 442.8 L448.6 445.8 L448.8 448.9 L449.0 451.9 L449.3 454.9 L449.5 457.9 L449.8 460.9 L450.0 463.9 L450.3 467.0 L450.5 470.0 L450.7 473.0 L451.0 476.0 L451.2 479.0 L451.5 482.0 L451.7 485.0 L452.0 488.1 L452.2 491.1 L452.4 494.1 L452.7 497.1 L452.9 500.1 L453.2 503.1 L453.4 506.2 L453.7 509.2 L453.9 512.2 L454.1 515.2 L454.4 518.0 L454.6 520.5 L454.7 522.4 L454.7 522.2M400.4 152.4 L398.3 155.0 L398.3 156.8 L398.4 158.6 L398.5 160.4 L398.7 162.1 L398.8 163.9 L399.0 165.7 L399.1 167.4 L399.3 169.2 L399.4 170.9 L399.7 172.7 L399.9 174.4 L400.6 175.9 L401.5 177.4 L402.3 178.9 L403.1 180.4 L403.9 181.9 L404.7 183.4 L405.5 184.9 L406.2 186.5 L406.9 188.0 L407.5 189.6 L408.2 191.2 L408.7 192.8 L409.3 194.4 L409.8 196.0 L410.4 197.6 L410.9 199.2 L411.4 200.8 L411.9 202.4 L412.4 204.1 L412.9 205.7 L413.4 207.3 L413.9 208.9 L414.3 210.6 L414.8 212.2 L415.2 213.9 L415.6 215.5 L416.0 217.2 L416.3 218.9 L416.7 220.6 L417.0 222.3 L417.3 224.0 L417.6 225.7 L417.9 227.4 L418.2 229.1 L418.4 230.8 L418.6 232.6 L418.8 234.3 L418.9 236.1 L419.0 237.8 L419.1 239.6 L419.2 241.4 L419.3 243.2 L419.4 245.0 L419.4 246.8 L419.4 248.6 L419.3 250.5 L419.3 252.3 L419.2 254.1 L419.1 256.0 L419.0 257.9 L418.8 259.8 L418.6 261.7 L418.3 263.6 L417.9 265.6 L417.5 267.6 L417.0 269.6 L416.6 271.6 L416.1 273.6 L415.5 275.6 L415.0 277.7 L414.4 279.7 L413.7 281.8 L413.0 283.9 L412.3 286.0 L411.6 288.1 L410.9 290.2 L410.2 292.3 L409.5 294.4 L408.7 296.5 L408.0 298.6 L407.3 300.7 L406.7 302.8 L406.0 304.8 L405.4 306.9 L404.7 309.0 L404.1 311.0 L403.5 313.1 L402.9 315.4 L401.8 319.1 L400.9 322.7 L400.2 326.3 L399.5 329.8 L399.0 333.3 L398.7 336.6 L398.8 339.9 L399.0 343.1 L399.2 346.3 L399.4 349.4 L399.7 352.6 L400.1 355.7 L400.6 358.8 L401.1 361.9 L401.5 364.9 L402.0 368.0 L402.4 371.1 L402.9 374.2 L403.4 377.3 L403.9 380.4 L404.4 383.4 L405.0 386.5 L405.6 389.5 L406.2 392.5 L406.8 395.5 L407.4 398.6 L408.1 401.6 L408.7 404.6 L409.3 407.6 L409.9 410.7 L410.5 413.7 L411.1 416.7 L411.7 419.8 L412.3 422.8 L412.9 425.8 L413.6 428.8 L414.2 431.8 L414.8 434.8 L415.5 437.9 L416.1 440.9 L416.8 443.9 L417.5 446.9 L418.1 449.9 L418.8 452.9 L419.5 455.9 L420.2 458.9 L420.8 461.9 L421.5 464.9 L422.2 467.9 L422.9 470.9 L423.5 473.9 L424.2 476.9 L424.9 479.9 L425.6 482.9 L426.2 485.9 L426.9 488.9 L427.6 491.9 L428.3 494.9 L429.0 497.9 L429.7 500.9 L430.3 503.9 L430.9 506.9 L431.5 510.0 L432.2 512.9 L433.1 515.9 L434.3 518.7 L436.3 521.1 L440.2 522.9 L449.7 522.4M382.3 150.7 L378.4 153.2 L378.4 155.0 L378.4 156.7 L378.5 158.5 L378.7 160.3 L378.8 162.0 L379.0 163.8 L379.1 165.6 L379.3 167.3 L379.5 169.1 L379.8 170.8 L380.1 172.5 L381.2 174.1 L382.8 175.6 L384.0 177.2 L385.3 178.8 L386.6 180.3 L387.9 181.9 L389.2 183.4 L390.4 185.0 L391.5 186.6 L392.5 188.2 L393.5 189.8 L394.4 191.4 L395.2 193.0 L396.1 194.7 L396.9 196.3 L397.7 198.0 L398.5 199.6 L399.3 201.3 L400.1 202.9 L400.8 204.6 L401.6 206.2 L402.4 207.9 L403.1 209.5 L403.7 211.2 L404.4 212.9 L405.0 214.5 L405.5 216.2 L406.0 217.9 L406.5 219.6 L407.0 221.3 L407.4 223.0 L407.9 224.8 L408.3 226.5 L408.6 228.2 L408.9 229.9 L409.1 231.7 L409.3 233.4 L409.5 235.2 L409.6 237.0 L409.7 238.7 L409.8 240.5 L409.8 242.3 L409.7 244.1 L409.6 245.9 L409.5 247.7 L409.4 249.5 L409.2 251.4 L409.0 253.2 L408.7 255.0 L408.3 256.9 L407.9 258.8 L407.4 260.6 L406.7 262.5 L405.9 264.5 L405.1 266.4 L404.2 268.4 L403.3 270.3 L402.3 272.3 L401.3 274.3 L400.2 276.3 L399.0 278.3 L397.7 280.3 L396.4 282.3 L395.1 284.4 L393.8 286.4 L392.4 288.4 L391.0 290.5 L389.6 292.5 L388.2 294.6 L386.9 296.6 L385.6 298.6 L384.3 300.7 L383.0 302.7 L381.7 304.7 L380.5 306.7 L379.3 308.7 L378.2 310.7 L376.9 313.0 L374.9 316.6 L373.1 320.1 L371.6 323.6 L370.2 327.1 L369.1 330.5 L368.4 333.8 L368.4 337.0 L368.5 340.2 L368.7 343.4 L368.9 346.6 L369.2 349.7 L369.8 352.9 L370.4 356.0 L371.0 359.1 L371.6 362.2 L372.2 365.3 L372.8 368.4 L373.4 371.5 L374.1 374.6 L374.8 377.6 L375.5 380.7 L376.3 383.8 L377.2 386.8 L378.1 389.9 L379.0 392.9 L379.9 396.0 L380.8 399.0 L381.7 402.1 L382.5 405.1 L383.4 408.2 L384.3 411.3 L385.1 414.3 L386.0 417.4 L386.9 420.4 L387.8 423.5 L388.7 426.5 L389.7 429.5 L390.6 432.6 L391.6 435.6 L392.5 438.7 L393.5 441.7 L394.5 444.7 L395.4 447.8 L396.4 450.8 L397.5 453.8 L398.5 456.9 L399.5 459.9 L400.5 462.9 L401.4 466.0 L402.4 469.0 L403.4 472.0 L404.4 475.0 L405.4 478.1 L406.4 481.1 L407.4 484.1 L408.4 487.2 L409.5 490.2 L410.5 493.2 L411.5 496.2 L412.5 499.3 L413.4 502.3 L414.2 505.4 L415.2 508.4 L416.2 511.4 L417.5 514.4 L419.5 517.3 L422.8 519.9 L429.5 521.9 L446.0 522.1M375.4 146.9 L370.9 149.1 L370.8 150.8 L370.8 152.6 L371.0 154.4 L371.1 156.1 L371.2 157.9 L371.4 159.7 L371.5 161.4 L371.7 163.2 L371.9 165.0 L372.3 166.7 L372.6 168.5 L373.9 170.1 L375.6 171.8 L377.1 173.4 L378.6 175.1 L380.0 176.7 L381.5 178.4 L383.0 180.0 L384.4 181.7 L385.6 183.4 L386.8 185.1 L387.9 186.8 L388.9 188.4 L389.9 190.1 L390.9 191.8 L391.8 193.5 L392.7 195.2 L393.6 196.9 L394.5 198.7 L395.4 200.4 L396.3 202.1 L397.1 203.8 L398.0 205.5 L398.8 207.2 L399.5 208.9 L400.2 210.6 L400.9 212.3 L401.6 214.1 L402.1 215.8 L402.7 217.5 L403.2 219.3 L403.7 221.0 L404.2 222.7 L404.6 224.5 L404.9 226.2 L405.2 228.0 L405.5 229.7 L405.7 231.5 L405.9 233.2 L406.0 235.0 L406.1 236.8 L406.1 238.6 L406.2 240.3 L406.1 242.1 L405.9 243.9 L405.8 245.7 L405.6 247.5 L405.4 249.3 L405.1 251.1 L404.7 252.9 L404.3 254.7 L403.8 256.5 L403.2 258.3 L402.4 260.2 L401.4 262.0 L400.4 263.9 L399.3 265.7 L398.2 267.6 L397.1 269.5 L395.8 271.3 L394.5 273.2 L393.2 275.1 L391.7 277.0 L390.1 278.9 L388.5 280.8 L387.0 282.7 L385.4 284.6 L383.7 286.5 L382.1 288.4 L380.4 290.3 L378.8 292.2 L377.3 294.1 L375.8 296.0 L374.2 297.9 L372.8 299.8 L371.3 301.7 L369.9 303.6 L368.6 305.5 L367.0 307.6 L364.6 311.0 L362.5 314.4 L360.7 317.7 L359.1 321.0 L357.7 324.3 L356.9 327.6 L356.9 330.7 L357.0 333.9 L357.1 337.1 L357.3 340.3 L357.7 343.4 L358.2 346.6 L358.9 349.7 L359.6 352.8 L360.3 356.0 L360.9 359.1 L361.6 362.2 L362.2 365.4 L363.0 368.5 L363.7 371.6 L364.6 374.8 L365.5 377.9 L366.4 381.0 L367.4 384.1 L368.5 387.2 L369.5 390.3 L370.4 393.4 L371.4 396.5 L372.4 399.6 L373.3 402.7 L374.3 405.8 L375.3 408.9 L376.3 412.1 L377.3 415.2 L378.3 418.3 L379.3 421.4 L380.4 424.5 L381.4 427.6 L382.5 430.7 L383.5 433.8 L384.6 436.9 L385.7 440.0 L386.8 443.1 L388.0 446.2 L389.1 449.3 L390.2 452.4 L391.3 455.5 L392.4 458.6 L393.6 461.7 L394.7 464.8 L395.8 467.9 L396.9 471.0 L398.0 474.1 L399.1 477.1 L400.3 480.2 L401.4 483.3 L402.6 486.4 L403.7 489.5 L404.8 492.6 L405.9 495.7 L406.9 498.8 L407.9 501.9 L409.0 505.0 L410.1 508.1 L411.6 511.2 L413.9 514.2 L417.7 517.1 L425.4 519.7 L444.6 521.3M381.6 142.1 L377.7 143.8 L377.6 145.6 L377.7 147.3 L377.8 149.1 L377.9 150.9 L378.1 152.6 L378.2 154.4 L378.4 156.1 L378.5 157.9 L378.8 159.7 L379.0 161.4 L379.4 163.2 L380.5 165.0 L382.0 166.8 L383.4 168.6 L384.6 170.4 L385.9 172.2 L387.3 173.9 L388.6 175.7 L389.8 177.5 L390.9 179.3 L391.9 181.1 L392.9 182.9 L393.8 184.6 L394.7 186.4 L395.6 188.2 L396.4 190.0 L397.2 191.8 L398.0 193.5 L398.8 195.3 L399.6 197.1 L400.4 198.9 L401.2 200.6 L401.9 202.4 L402.6 204.2 L403.3 206.0 L404.0 207.7 L404.6 209.5 L405.1 211.3 L405.7 213.1 L406.1 214.8 L406.6 216.6 L407.1 218.4 L407.5 220.1 L407.9 221.9 L408.2 223.7 L408.5 225.5 L408.7 227.2 L409.0 229.0 L409.1 230.7 L409.2 232.5 L409.3 234.3 L409.4 236.0 L409.4 237.8 L409.4 239.6 L409.3 241.3 L409.2 243.1 L409.0 244.8 L408.8 246.6 L408.6 248.3 L408.3 250.1 L407.9 251.9 L407.5 253.6 L407.0 255.4 L406.3 257.1 L405.5 258.9 L404.6 260.6 L403.7 262.3 L402.8 264.1 L401.8 265.8 L400.7 267.6 L399.6 269.3 L398.4 271.0 L397.1 272.8 L395.8 274.5 L394.4 276.2 L393.1 278.0 L391.7 279.7 L390.3 281.4 L388.9 283.2 L387.5 284.9 L386.1 286.6 L384.7 288.4 L383.4 290.1 L382.1 291.8 L380.8 293.6 L379.6 295.3 L378.4 297.0 L377.2 298.8 L375.9 300.7 L373.9 303.9 L372.0 307.0 L370.5 310.1 L369.1 313.3 L367.9 316.4 L367.3 319.5 L367.3 322.7 L367.4 325.9 L367.5 329.0 L367.7 332.2 L368.1 335.4 L368.6 338.5 L369.2 341.7 L369.9 344.9 L370.5 348.1 L371.1 351.2 L371.7 354.4 L372.3 357.6 L373.0 360.8 L373.7 363.9 L374.4 367.1 L375.3 370.3 L376.1 373.5 L377.1 376.6 L378.0 379.8 L378.9 383.0 L379.8 386.2 L380.6 389.4 L381.5 392.5 L382.4 395.7 L383.3 398.9 L384.1 402.1 L385.0 405.3 L386.0 408.4 L386.9 411.6 L387.8 414.8 L388.7 418.0 L389.7 421.2 L390.7 424.3 L391.6 427.5 L392.6 430.7 L393.6 433.9 L394.6 437.1 L395.6 440.3 L396.6 443.4 L397.6 446.6 L398.6 449.8 L399.7 453.0 L400.7 456.2 L401.7 459.3 L402.7 462.5 L403.7 465.7 L404.7 468.9 L405.7 472.1 L406.7 475.3 L407.7 478.4 L408.8 481.6 L409.8 484.8 L410.8 488.0 L411.8 491.2 L412.7 494.4 L413.6 497.5 L414.5 500.7 L415.6 503.9 L416.9 507.1 L418.9 510.3 L422.3 513.5 L429.1 516.8 L445.9 520.3M399.2 137.6 L397.0 138.8 L397.0 140.5 L397.1 142.3 L397.2 144.1 L397.4 145.8 L397.5 147.6 L397.6 149.4 L397.8 151.1 L397.9 152.9 L398.1 154.7 L398.4 156.4 L398.6 158.2 L399.3 160.1 L400.3 162.1 L401.1 164.0 L401.9 165.9 L402.8 167.8 L403.6 169.7 L404.4 171.6 L405.2 173.5 L405.9 175.4 L406.6 177.3 L407.2 179.2 L407.8 181.0 L408.4 182.9 L408.9 184.7 L409.5 186.6 L410.0 188.4 L410.5 190.3 L411.1 192.1 L411.6 194.0 L412.1 195.8 L412.6 197.7 L413.1 199.5 L413.6 201.4 L414.1 203.2 L414.5 205.0 L414.9 206.8 L415.3 208.7 L415.7 210.5 L416.0 212.3 L416.3 214.1 L416.7 215.9 L417.0 217.7 L417.3 219.5 L417.5 221.3 L417.7 223.1 L418.0 224.8 L418.1 226.6 L418.3 228.4 L418.4 230.1 L418.5 231.9 L418.6 233.6 L418.7 235.4 L418.7 237.1 L418.7 238.9 L418.7 240.6 L418.7 242.3 L418.6 244.0 L418.6 245.8 L418.4 247.5 L418.3 249.2 L418.1 250.9 L417.9 252.5 L417.5 254.2 L417.1 255.8 L416.6 257.5 L416.2 259.1 L415.7 260.7 L415.2 262.4 L414.6 264.0 L414.0 265.6 L413.4 267.2 L412.7 268.7 L411.9 270.3 L411.2 271.9 L410.5 273.5 L409.7 275.0 L408.9 276.6 L408.2 278.2 L407.4 279.7 L406.6 281.3 L405.9 282.9 L405.2 284.5 L404.5 286.0 L403.8 287.6 L403.1 289.2 L402.5 290.8 L401.9 292.4 L401.2 294.2 L400.1 297.1 L399.1 300.0 L398.3 302.9 L397.6 305.9 L397.0 308.9 L396.7 311.9 L396.8 315.0 L397.0 318.2 L397.2 321.3 L397.4 324.5 L397.7 327.7 L398.1 330.9 L398.6 334.1 L399.1 337.3 L399.6 340.5 L400.0 343.7 L400.5 347.0 L400.9 350.2 L401.4 353.4 L402.0 356.6 L402.5 359.8 L403.1 363.1 L403.7 366.3 L404.4 369.6 L405.0 372.8 L405.6 376.1 L406.3 379.3 L406.9 382.6 L407.5 385.8 L408.1 389.1 L408.7 392.3 L409.4 395.6 L410.0 398.8 L410.6 402.1 L411.3 405.3 L411.9 408.6 L412.6 411.8 L413.2 415.1 L413.9 418.3 L414.6 421.6 L415.3 424.8 L415.9 428.1 L416.6 431.4 L417.3 434.6 L418.0 437.9 L418.7 441.2 L419.4 444.4 L420.1 447.7 L420.8 450.9 L421.5 454.2 L422.2 457.5 L422.9 460.7 L423.6 464.0 L424.3 467.3 L425.0 470.5 L425.7 473.8 L426.4 477.0 L427.1 480.3 L427.8 483.6 L428.5 486.8 L429.2 490.1 L429.8 493.3 L430.5 496.6 L431.2 499.9 L432.1 503.2 L433.4 506.6 L435.4 510.1 L439.5 514.1 L449.5 519.4M423.5 134.5 L423.6 135.4 L423.7 137.1 L423.9 138.9 L424.0 140.6 L424.2 142.4 L424.3 144.2 L424.5 145.9 L424.6 147.7 L424.7 149.5 L424.9 151.2 L425.0 153.0 L425.2 154.8 L425.3 156.8 L425.5 158.8 L425.7 160.8 L425.8 162.8 L426.0 164.8 L426.1 166.8 L426.3 168.8 L426.5 170.8 L426.6 172.8 L426.8 174.7 L426.9 176.6 L427.1 178.6 L427.2 180.5 L427.4 182.4 L427.5 184.3 L427.7 186.2 L427.8 188.1 L428.0 190.0 L428.1 191.9 L428.3 193.8 L428.5 195.7 L428.6 197.5 L428.8 199.4 L428.9 201.3 L429.1 203.2 L429.2 205.0 L429.4 206.9 L429.5 208.7 L429.6 210.5 L429.8 212.4 L429.9 214.2 L430.1 216.0 L430.2 217.8 L430.4 219.6 L430.5 221.4 L430.7 223.2 L430.8 225.0 L431.0 226.8 L431.1 228.5 L431.2 230.3 L431.4 232.0 L431.5 233.8 L431.7 235.5 L431.8 237.2 L431.9 238.9 L432.1 240.6 L432.2 242.3 L432.3 244.0 L432.5 245.7 L432.6 247.3 L432.7 249.0 L432.9 250.6 L433.0 252.2 L433.1 253.8 L433.2 255.4 L433.4 256.9 L433.5 258.5 L433.6 260.0 L433.7 261.5 L433.9 263.0 L434.0 264.5 L434.1 266.0 L434.2 267.5 L434.3 268.9 L434.5 270.4 L434.6 271.9 L434.7 273.3 L434.8 274.8 L434.9 276.2 L435.0 277.7 L435.2 279.1 L435.3 280.6 L435.4 282.1 L435.5 283.6 L435.6 285.1 L435.8 286.5 L435.9 288.1 L436.0 289.8 L436.2 292.5 L436.5 295.2 L436.7 298.0 L436.9 300.9 L437.1 303.7 L437.4 306.7 L437.6 309.8 L437.9 313.0 L438.1 316.1 L438.4 319.3 L438.6 322.5 L438.9 325.7 L439.2 328.9 L439.4 332.2 L439.7 335.4 L439.9 338.6 L440.2 341.9 L440.5 345.1 L440.7 348.4 L441.0 351.6 L441.3 354.9 L441.5 358.2 L441.8 361.5 L442.0 364.8 L442.3 368.1 L442.6 371.4 L442.8 374.7 L443.1 377.9 L443.4 381.2 L443.6 384.5 L443.9 387.8 L444.2 391.1 L444.4 394.4 L444.7 397.7 L445.0 401.0 L445.2 404.3 L445.5 407.6 L445.8 410.9 L446.0 414.2 L446.3 417.5 L446.6 420.8 L446.8 424.2 L447.1 427.5 L447.4 430.8 L447.6 434.1 L447.9 437.4 L448.2 440.7 L448.4 444.1 L448.7 447.4 L449.0 450.7 L449.2 454.0 L449.5 457.3 L449.8 460.7 L450.0 464.0 L450.3 467.3 L450.6 470.6 L450.8 473.9 L451.1 477.3 L451.4 480.6 L451.6 483.9 L451.9 487.2 L452.1 490.5 L452.4 493.8 L452.7 497.1 L453.0 500.5 L453.2 504.0 L453.5 507.8 L453.9 512.3 L454.4 518.8M448.0 133.6 L450.4 134.5 L450.7 136.2 L450.9 138.0 L451.0 139.7 L451.2 141.5 L451.3 143.3 L451.5 145.0 L451.6 146.8 L451.7 148.6 L451.8 150.3 L451.9 152.1 L451.9 153.9 L451.5 155.9 L450.9 158.0 L450.4 160.0 L449.9 162.0 L449.4 164.1 L448.8 166.1 L448.3 168.1 L447.9 170.1 L447.5 172.1 L447.1 174.0 L446.8 176.0 L446.5 177.9 L446.2 179.8 L446.0 181.8 L445.7 183.7 L445.5 185.6 L445.3 187.5 L445.0 189.4 L444.8 191.3 L444.6 193.2 L444.4 195.1 L444.2 197.0 L444.0 198.9 L443.9 200.8 L443.7 202.7 L443.6 204.5 L443.5 206.4 L443.4 208.2 L443.4 210.1 L443.3 211.9 L443.3 213.7 L443.3 215.6 L443.3 217.4 L443.3 219.2 L443.4 221.0 L443.5 222.8 L443.6 224.6 L443.7 226.3 L443.9 228.1 L444.0 229.8 L444.2 231.6 L444.4 233.3 L444.7 235.0 L444.9 236.8 L445.2 238.5 L445.5 240.2 L445.9 241.9 L446.2 243.5 L446.6 245.2 L447.0 246.9 L447.5 248.5 L448.0 250.1 L448.6 251.7 L449.3 253.3 L450.0 254.8 L450.7 256.3 L451.5 257.9 L452.2 259.4 L453.0 260.9 L453.9 262.4 L454.8 263.8 L455.7 265.3 L456.7 266.7 L457.7 268.2 L458.6 269.6 L459.6 271.0 L460.6 272.4 L461.6 273.9 L462.7 275.3 L463.7 276.7 L464.6 278.2 L465.6 279.6 L466.5 281.1 L467.5 282.5 L468.4 284.0 L469.3 285.4 L470.1 286.9 L471.1 288.6 L472.7 291.2 L474.1 293.9 L475.3 296.7 L476.5 299.5 L477.6 302.4 L478.3 305.4 L478.7 308.5 L479.1 311.6 L479.4 314.7 L479.7 317.9 L479.9 321.1 L480.0 324.3 L480.0 327.6 L480.1 330.8 L480.1 334.1 L480.2 337.3 L480.2 340.5 L480.3 343.8 L480.3 347.0 L480.3 350.3 L480.3 353.6 L480.2 356.9 L480.1 360.2 L480.0 363.5 L479.9 366.8 L479.8 370.1 L479.7 373.4 L479.6 376.7 L479.5 380.0 L479.4 383.3 L479.3 386.6 L479.2 389.9 L479.1 393.2 L479.0 396.6 L478.9 399.9 L478.8 403.2 L478.6 406.5 L478.5 409.8 L478.4 413.1 L478.2 416.5 L478.1 419.8 L477.9 423.1 L477.8 426.4 L477.6 429.8 L477.4 433.1 L477.2 436.4 L477.1 439.8 L476.9 443.1 L476.7 446.4 L476.6 449.8 L476.4 453.1 L476.3 456.4 L476.1 459.8 L475.9 463.1 L475.7 466.4 L475.6 469.8 L475.4 473.1 L475.2 476.5 L475.0 479.8 L474.9 483.1 L474.8 486.4 L474.7 489.7 L474.5 493.0 L474.3 496.4 L474.0 499.8 L473.3 503.3 L471.8 507.2 L468.4 511.8 L459.4 518.6M466.2 135.3 L470.3 136.4 L470.6 138.1 L470.9 139.8 L471.0 141.6 L471.2 143.4 L471.3 145.1 L471.4 146.9 L471.6 148.7 L471.7 150.4 L471.8 152.2 L471.8 154.0 L471.7 155.8 L470.9 157.7 L469.6 159.8 L468.6 161.7 L467.7 163.7 L466.7 165.7 L465.6 167.6 L464.6 169.6 L463.7 171.6 L462.9 173.5 L462.2 175.4 L461.5 177.3 L460.9 179.3 L460.3 181.2 L459.7 183.0 L459.2 184.9 L458.7 186.8 L458.2 188.7 L457.6 190.6 L457.2 192.5 L456.7 194.3 L456.2 196.2 L455.7 198.1 L455.3 200.0 L454.9 201.8 L454.6 203.7 L454.2 205.5 L454.0 207.4 L453.7 209.2 L453.5 211.0 L453.4 212.8 L453.2 214.7 L453.1 216.5 L452.9 218.3 L452.9 220.1 L452.9 221.9 L452.9 223.7 L453.0 225.4 L453.1 227.2 L453.3 229.0 L453.5 230.7 L453.7 232.5 L454.0 234.2 L454.3 235.9 L454.7 237.7 L455.1 239.4 L455.5 241.1 L456.0 242.8 L456.5 244.5 L457.1 246.2 L457.7 247.9 L458.4 249.5 L459.2 251.2 L460.1 252.8 L461.2 254.4 L462.4 256.0 L463.5 257.5 L464.7 259.1 L466.0 260.7 L467.3 262.2 L468.7 263.7 L470.1 265.3 L471.7 266.8 L473.3 268.3 L474.9 269.8 L476.5 271.3 L478.2 272.8 L479.8 274.2 L481.5 275.7 L483.2 277.2 L484.8 278.7 L486.4 280.2 L488.0 281.7 L489.5 283.2 L491.1 284.7 L492.6 286.2 L494.1 287.7 L495.5 289.3 L497.1 291.0 L499.6 293.8 L502.0 296.5 L503.9 299.4 L505.8 302.3 L507.5 305.2 L508.6 308.2 L509.1 311.3 L509.5 314.4 L509.9 317.6 L510.2 320.7 L510.3 323.9 L510.3 327.1 L510.2 330.4 L510.1 333.6 L510.0 336.8 L509.9 340.1 L509.8 343.3 L509.7 346.5 L509.6 349.8 L509.4 353.0 L509.2 356.3 L508.9 359.5 L508.5 362.8 L508.1 366.1 L507.7 369.4 L507.3 372.7 L506.9 376.0 L506.6 379.2 L506.2 382.5 L505.9 385.8 L505.5 389.1 L505.2 392.4 L504.8 395.6 L504.4 398.9 L504.0 402.2 L503.6 405.5 L503.2 408.8 L502.7 412.1 L502.3 415.4 L501.8 418.7 L501.4 422.0 L500.9 425.3 L500.4 428.6 L500.0 431.9 L499.5 435.2 L499.0 438.5 L498.5 441.8 L498.0 445.1 L497.5 448.4 L497.0 451.7 L496.5 455.0 L496.1 458.3 L495.6 461.6 L495.1 464.9 L494.6 468.2 L494.1 471.5 L493.6 474.8 L493.1 478.1 L492.6 481.4 L492.1 484.7 L491.7 488.0 L491.3 491.3 L490.9 494.6 L490.4 497.9 L489.6 501.2 L488.1 504.7 L485.3 508.5 L479.1 512.8 L463.1 518.9" fill="none" stroke="#0a0a0a" stroke-width="1.500"/><path d="M467.2 146.0 L467.5 147.8 L467.8 149.5 L467.9 151.3 L468.1 153.1 L468.2 154.8 L468.4 156.6 L468.5 158.4 L468.6 160.1 L468.7 161.9 L468.7 163.6 L468.6 165.4 L467.8 167.1 L466.6 168.9 L465.6 170.6 L464.6 172.3 L463.6 174.1 L462.6 175.8 L461.6 177.5 L460.7 179.2 L459.9 181.0 L459.1 182.7 L458.5 184.5 L457.8 186.2 L457.2 187.9 L456.7 189.7 L456.2 191.4 L455.6 193.2 L455.1 194.9 L454.6 196.7 L454.1 198.4 L453.7 200.2 L453.2 201.9 L452.7 203.7 L452.3 205.4 L451.9 207.2 L451.6 208.9 L451.2 210.7 L451.0 212.4 L450.7 214.2 L450.5 215.9 L450.4 217.7 L450.2 219.4 L450.1 221.2 L450.0 222.9 L449.9 224.7 L449.9 226.5 L450.0 228.2 L450.0 230.0 L450.2 231.7 L450.3 233.5 L450.5 235.3 L450.7 237.0 L451.0 238.8 L451.3 240.6 L451.7 242.3 L452.1 244.1 L452.5 245.9 L453.0 247.7 L453.5 249.4 L454.1 251.2 L454.7 253.0 L455.4 254.8 L456.2 256.6 L457.1 258.3 L458.2 260.1 L459.3 261.9 L460.5 263.7 L461.7 265.5 L463.0 267.3 L464.3 269.1 L465.6 270.9 L467.1 272.7 L468.6 274.5 L470.2 276.3 L471.8 278.1 L473.5 279.9 L475.1 281.7 L476.7 283.5 L478.4 285.4 L480.1 287.2 L481.7 289.0 L483.3 290.8 L484.9 292.6 L486.4 294.4 L488.0 296.2 L489.5 298.0 L490.9 299.8 L492.3 301.6 L494.0 303.6 L496.5 306.9 L498.8 310.1 L500.8 313.3 L502.6 316.5 L504.3 319.7 L505.4 322.9 L505.9 326.1 L506.3 329.3 L506.7 332.4 L507.0 335.6 L507.2 338.8 L507.2 341.9 L507.0 345.1 L506.9 348.2 L506.8 351.4 L506.8 354.6 L506.7 357.7 L506.5 360.9 L506.4 364.0 L506.2 367.2 L506.0 370.3 L505.7 373.5 L505.3 376.6 L504.9 379.8 L504.5 382.9 L504.1 386.1 L503.8 389.2 L503.4 392.4 L503.1 395.5 L502.7 398.7 L502.4 401.8 L502.0 405.0 L501.6 408.1 L501.3 411.3 L500.9 414.4 L500.4 417.6 L500.0 420.7 L499.6 423.9 L499.2 427.0 L498.7 430.1 L498.3 433.3 L497.8 436.4 L497.3 439.6 L496.8 442.7 L496.3 445.9 L495.9 449.0 L495.4 452.2 L494.9 455.3 L494.4 458.5 L493.9 461.6 L493.4 464.7 L493.0 467.9 L492.5 471.0 L492.0 474.2 L491.5 477.3 L491.0 480.5 L490.5 483.6 L490.0 486.8 L489.5 489.9 L489.0 493.1 L488.6 496.2 L488.3 499.4 L487.8 502.5 L487.3 505.6 L486.5 508.8M380.5 152.4 L380.4 154.2 L380.5 156.0 L380.6 157.8 L380.7 159.5 L380.9 161.3 L381.0 163.1 L381.2 164.8 L381.3 166.6 L381.6 168.3 L381.8 170.1 L382.2 171.8 L383.3 173.4 L384.8 174.9 L386.2 176.5 L387.5 178.0 L388.8 179.6 L390.1 181.2 L391.4 182.7 L392.6 184.3 L393.7 185.9 L394.8 187.5 L395.7 189.1 L396.7 190.7 L397.6 192.4 L398.4 194.0 L399.2 195.7 L400.1 197.3 L400.9 199.0 L401.7 200.6 L402.5 202.3 L403.3 203.9 L404.0 205.6 L404.8 207.2 L405.5 208.9 L406.2 210.5 L406.8 212.2 L407.4 213.9 L408.0 215.6 L408.5 217.3 L409.0 219.0 L409.5 220.7 L409.9 222.4 L410.4 224.1 L410.8 225.8 L411.1 227.6 L411.4 229.3 L411.6 231.1 L411.8 232.8 L412.0 234.6 L412.1 236.3 L412.2 238.1 L412.3 239.9 L412.3 241.7 L412.3 243.5 L412.2 245.3 L412.0 247.1 L411.9 248.9 L411.7 250.7 L411.4 252.6 L411.2 254.4 L410.8 256.3 L410.4 258.1 L409.9 260.0 L409.2 261.9 L408.3 263.8 L407.5 265.8 L406.6 267.7 L405.6 269.7 L404.6 271.6 L403.6 273.6 L402.4 275.6 L401.2 277.6 L400.0 279.6 L398.6 281.6 L397.3 283.7 L395.9 285.7 L394.5 287.7 L393.1 289.8 L391.7 291.8 L390.2 293.8 L388.9 295.9 L387.5 297.9 L386.2 299.9 L384.9 301.9 L383.6 303.9 L382.4 305.9 L381.1 307.9 L380.0 309.9 L378.7 312.2 L376.6 315.8 L374.7 319.3 L373.2 322.8 L371.8 326.2 L370.6 329.7 L370.0 333.0 L370.0 336.2 L370.1 339.4 L370.2 342.6 L370.4 345.7 L370.8 348.9 L371.3 352.0 L371.9 355.1 L372.6 358.2 L373.2 361.3 L373.8 364.4 L374.4 367.5 L375.0 370.6 L375.7 373.7 L376.4 376.8 L377.1 379.9 L378.0 383.0 L378.9 386.0 L379.8 389.1 L380.7 392.1 L381.6 395.2 L382.5 398.2 L383.4 401.3 L384.2 404.3 L385.1 407.4 L386.0 410.5 L386.9 413.5 L387.8 416.6 L388.7 419.6 L389.6 422.7 L390.6 425.7 L391.5 428.8 L392.4 431.8 L393.4 434.9 L394.4 437.9 L395.4 440.9 L396.3 444.0 L397.4 447.0 L398.4 450.0 L399.4 453.1 L400.4 456.1 L401.4 459.1 L402.4 462.2 L403.4 465.2 L404.4 468.2 L405.5 471.3 L406.5 474.3 L407.5 477.3 L408.5 480.4 L409.5 483.4 L410.5 486.4 L411.6 489.5 L412.6 492.5 L413.6 495.5 L414.6 498.6 L415.5 501.6 L416.4 504.7 L417.4 507.7 L418.4 510.8 L419.7 513.7M381.5 143.5 L381.5 145.3 L381.5 147.1 L381.6 148.8 L381.8 150.6 L381.9 152.3 L382.1 154.1 L382.2 155.9 L382.4 157.6 L382.6 159.4 L382.9 161.2 L383.2 162.9 L384.3 164.7 L385.8 166.5 L387.1 168.3 L388.4 170.1 L389.7 171.9 L391.0 173.7 L392.3 175.5 L393.4 177.3 L394.5 179.1 L395.5 180.9 L396.5 182.7 L397.4 184.5 L398.3 186.3 L399.1 188.0 L399.9 189.8 L400.7 191.6 L401.5 193.4 L402.3 195.2 L403.1 197.0 L403.9 198.7 L404.6 200.5 L405.4 202.3 L406.1 204.1 L406.7 205.9 L407.4 207.6 L408.0 209.4 L408.5 211.2 L409.0 213.0 L409.5 214.7 L410.0 216.5 L410.4 218.3 L410.9 220.1 L411.2 221.8 L411.6 223.6 L411.8 225.4 L412.1 227.1 L412.3 228.9 L412.5 230.7 L412.6 232.4 L412.7 234.2 L412.7 235.9 L412.8 237.7 L412.7 239.5 L412.6 241.2 L412.5 243.0 L412.4 244.7 L412.2 246.5 L412.0 248.2 L411.7 250.0 L411.3 251.7 L410.9 253.5 L410.4 255.2 L409.8 257.0 L409.0 258.7 L408.1 260.5 L407.2 262.2 L406.3 263.9 L405.3 265.7 L404.3 267.4 L403.2 269.1 L402.0 270.8 L400.8 272.6 L399.5 274.3 L398.2 276.0 L396.8 277.7 L395.5 279.5 L394.1 281.2 L392.7 282.9 L391.3 284.6 L390.0 286.3 L388.7 288.1 L387.4 289.8 L386.1 291.5 L384.9 293.2 L383.6 295.0 L382.5 296.7 L381.3 298.4 L380.0 300.4 L378.0 303.5 L376.2 306.6 L374.8 309.7 L373.4 312.8 L372.2 315.9 L371.6 319.1 L371.6 322.2 L371.7 325.4 L371.9 328.6 L372.1 331.7 L372.4 334.9 L373.0 338.1 L373.6 341.2 L374.2 344.4 L374.8 347.6 L375.4 350.8 L376.0 354.0 L376.6 357.1 L377.3 360.3 L378.0 363.5 L378.7 366.7 L379.5 369.9 L380.4 373.0 L381.3 376.2 L382.2 379.4 L383.1 382.6 L384.0 385.8 L384.8 389.0 L385.7 392.1 L386.5 395.3 L387.4 398.5 L388.3 401.7 L389.2 404.9 L390.1 408.1 L391.0 411.3 L391.9 414.4 L392.8 417.6 L393.7 420.8 L394.7 424.0 L395.6 427.2 L396.6 430.4 L397.6 433.6 L398.6 436.7 L399.6 439.9 L400.6 443.1 L401.6 446.3 L402.6 449.5 L403.6 452.7 L404.5 455.9 L405.5 459.1 L406.5 462.3 L407.5 465.4 L408.5 468.6 L409.5 471.8 L410.5 475.0 L411.5 478.2 L412.5 481.4 L413.5 484.6 L414.5 487.8 L415.5 490.9 L416.4 494.1 L417.3 497.3 L418.2 500.5 L419.3 503.7 L420.6 506.9M468.3 137.1 L468.6 138.8 L468.8 140.6 L469.0 142.3 L469.1 144.1 L469.3 145.9 L469.4 147.6 L469.6 149.4 L469.7 151.2 L469.7 152.9 L469.7 154.7 L469.7 156.5 L468.8 158.5 L467.6 160.5 L466.5 162.4 L465.5 164.4 L464.5 166.4 L463.4 168.3 L462.4 170.3 L461.5 172.3 L460.7 174.2 L459.9 176.1 L459.2 178.0 L458.6 179.9 L458.0 181.8 L457.4 183.7 L456.9 185.6 L456.3 187.5 L455.8 189.4 L455.3 191.2 L454.8 193.1 L454.3 195.0 L453.8 196.9 L453.3 198.7 L452.9 200.6 L452.5 202.5 L452.1 204.3 L451.8 206.2 L451.5 208.0 L451.3 209.8 L451.0 211.7 L450.9 213.5 L450.7 215.3 L450.5 217.1 L450.4 218.9 L450.4 220.7 L450.4 222.5 L450.4 224.3 L450.5 226.1 L450.6 227.8 L450.8 229.6 L451.0 231.3 L451.2 233.1 L451.4 234.8 L451.8 236.6 L452.2 238.3 L452.6 240.0 L453.0 241.7 L453.5 243.4 L454.0 245.1 L454.6 246.8 L455.2 248.5 L455.9 250.2 L456.7 251.8 L457.7 253.4 L458.8 255.0 L460.0 256.6 L461.2 258.2 L462.4 259.8 L463.7 261.3 L465.0 262.9 L466.4 264.4 L467.9 266.0 L469.5 267.5 L471.1 269.0 L472.7 270.5 L474.4 272.0 L476.1 273.5 L477.7 275.0 L479.5 276.5 L481.2 277.9 L482.8 279.4 L484.5 280.9 L486.1 282.5 L487.7 284.0 L489.2 285.5 L490.8 287.0 L492.3 288.5 L493.7 290.1 L495.3 291.8 L497.9 294.6 L500.3 297.4 L502.3 300.2 L504.2 303.1 L505.9 306.0 L507.1 309.0 L507.6 312.1 L508.0 315.3 L508.3 318.4 L508.6 321.6 L508.8 324.8 L508.8 328.0 L508.7 331.2 L508.5 334.5 L508.4 337.7 L508.4 340.9 L508.3 344.1 L508.1 347.4 L508.0 350.6 L507.8 353.9 L507.5 357.1 L507.2 360.4 L506.9 363.7 L506.4 366.9 L506.0 370.2 L505.6 373.5 L505.3 376.8 L504.9 380.1 L504.5 383.3 L504.2 386.6 L503.8 389.9 L503.4 393.2 L503.0 396.4 L502.6 399.7 L502.2 403.0 L501.8 406.3 L501.3 409.6 L500.9 412.9 L500.4 416.1 L500.0 419.4 L499.5 422.7 L499.0 426.0 L498.5 429.3 L498.0 432.6 L497.5 435.9 L497.0 439.2 L496.5 442.5 L496.0 445.8 L495.5 449.1 L495.0 452.4 L494.5 455.7 L494.0 459.0 L493.5 462.3 L493.0 465.6 L492.5 468.9 L492.0 472.2 L491.4 475.5 L490.9 478.8 L490.4 482.1 L489.9 485.4 L489.5 488.7 L489.1 492.0 L488.7 495.3 L488.1 498.6 L487.3 501.9" fill="none" stroke="#0c0c0c" stroke-width="0.800" stroke-opacity="0.700"/><path d="M357.500 143.500 H439 M357.500 143.500 V520.500 H439" fill="none" stroke="#4f7fe0" stroke-width="1"/><path d="M439 143.500 H384 C392 165 411 200 414.500 226 C416.500 244 410 252 402.500 260 C390 275 372 300 357.500 328 C360 360 366 385 371 405 C380 445 390 490 396 514 C398 519 401 520.500 406 520.500 H439" fill="none" stroke="#4f7fe0" stroke-width="1"/><rect x="354.0" y="140.0" width="7" height="7" fill="#fff" stroke="#4f7fe0" stroke-width="1"/><rect x="394.5" y="140.0" width="7" height="7" fill="#fff" stroke="#4f7fe0" stroke-width="1"/><rect x="354.0" y="325.5" width="7" height="7" fill="#fff" stroke="#4f7fe0" stroke-width="1"/><rect x="435.5" y="325.5" width="7" height="7" fill="#fff" stroke="#4f7fe0" stroke-width="1"/><rect x="354.0" y="516.5" width="7" height="7" fill="#fff" stroke="#4f7fe0" stroke-width="1"/><rect x="394.5" y="516.5" width="7" height="7" fill="#fff" stroke="#4f7fe0" stroke-width="1"/><path d="M439 110 V559.500" stroke="#27d0e4" stroke-width="1.800"/></svg>
<div class="b" style="left:52.50px;top:126.20px;width:58.00px;height:317.50px;background:#f0f0f0;border:1px solid #c9c9c9;border-radius:4px;box-shadow:0 1px 3px rgba(0,0,0,0.25);"></div>
<div class="b" style="left:53.50px;top:127.20px;width:56.00px;height:8.60px;background:#d3d3d3;border-radius:3px 3px 0 0;"></div>
<svg style="left:57.500px;top:129px" width="50" height="6" viewBox="0 0 50 6"><path d="M0.800 0.800 L4.600 4.600 M4.600 0.800 L0.800 4.600" stroke="#888" stroke-width="0.900"/><path d="M43.500 0.800 L41.500 2.700 L43.500 4.600 M46.500 0.800 L44.500 2.700 L46.500 4.600" fill="none" stroke="#999" stroke-width="0.800"/></svg>
<div class="b" style="left:73.00px;top:139.40px;width:16.00px;height:2.20px;background:#c2c2c2;border-radius:1px;"></div>
<div class="b" style="left:57.70px;top:151.70px;width:23.60px;height:19.00px;background:#b1b1b1;border-radius:2.500px;border:1px solid #a2a2a2;"></div>
<svg style="left:0;top:0" width="1024" height="576" viewBox="0 0 1024 576"><path d="M65.800 154.800 L65.800 167.800 L69.300 164.600 L75 163.900Z" fill="#333" stroke="#333" stroke-width="0.500" stroke-linejoin="round"/><path d="M90 155.600 L90 167.200 L93 164.500 L98.200 164.100Z" fill="#fff" stroke="#555" stroke-width="0.900" stroke-linejoin="round"/><rect x="102.6" y="167.9" width="1.400" height="1.400" fill="#444"/><rect x="77.6" y="187.0" width="1.400" height="1.400" fill="#444"/><rect x="102.6" y="187.0" width="1.400" height="1.400" fill="#444"/><rect x="77.6" y="206.4" width="1.400" height="1.400" fill="#444"/><rect x="102.6" y="206.4" width="1.400" height="1.400" fill="#444"/><rect x="77.6" y="225.4" width="1.400" height="1.400" fill="#444"/><rect x="102.6" y="225.4" width="1.400" height="1.400" fill="#444"/><rect x="77.6" y="244.2" width="1.400" height="1.400" fill="#444"/><rect x="77.6" y="263.5" width="1.400" height="1.400" fill="#444"/><rect x="102.6" y="263.5" width="1.400" height="1.400" fill="#444"/><rect x="102.6" y="302.0" width="1.400" height="1.400" fill="#444"/><g transform="translate(69.6,180.2) rotate(45)"><path d="M-3.200 -6.500 H3.200 V-3.500 H-3.200Z" fill="#333"/><path d="M-3.400 -2.600 H3.400 L4.200 2 L0 8 L-4.200 2Z" fill="#333"/><path d="M0 7 V1.500" stroke="#f0f0f0" stroke-width="0.900"/><circle cx="0" cy="0.800" r="1" fill="#f0f0f0"/></g><g transform="translate(96.4,180.2) rotate(45)"><path d="M-3.200 -6.500 H3.200 V-3.500 H-3.200Z" fill="#333"/><path d="M-3.400 -2.600 H3.400 L4.200 2 L0 8 L-4.200 2Z" fill="#333"/><path d="M0 7 V1.500" stroke="#f0f0f0" stroke-width="0.900"/><circle cx="0" cy="0.800" r="1" fill="#f0f0f0"/></g><path d="M89.800 175 C87 178 92.500 180 89.500 183.500 C88 185.500 90.500 187 92.500 186" fill="none" stroke="#333" stroke-width="1"/><path d="M69.5 194.6 L71.2 198.6 L75.5 199.0 L72.3 201.8 L73.2 206.0 L69.5 203.8 L65.8 206.0 L66.7 201.8 L63.5 199.0 L67.8 198.6Z" fill="#a9a9a9" stroke="#444" stroke-width="1" stroke-linejoin="round"/><path d="M100.200 192.800 L101.400 194 L94.200 203.600 L92.400 202Z" fill="#333"/><path d="M92 202.800 L93.800 204.600 C93.500 207 90.500 208.200 88.200 207.600 C90 206.500 89.800 203.800 92 202.800Z" fill="#333"/><text x="69.200" y="225.200" text-anchor="middle" font-family="Liberation Serif, serif" font-weight="700" font-size="17.500" fill="#333">T</text><path d="M89.300 215.500 A6 6 0 1 1 89 223.800" fill="none" stroke="#555" stroke-width="1" stroke-dasharray="1.300 1.200"/><path d="M88 212.800 L92.200 214.200 L89.200 217.600Z" fill="#333"/><path d="M92.500 213 A6.200 6.200 0 0 1 99 215.500" fill="none" stroke="#333" stroke-width="1.200"/><path d="M70.800 231.600 L77 237.400 L71.600 242.600 L65.300 236.800Z" fill="#333"/><path d="M64.600 237.600 L70.700 243.300 L68.800 244.800 L65.600 244.300 L63.200 240Z" fill="#fff" stroke="#333" stroke-width="0.800" stroke-linejoin="round"/><ellipse cx="90.800" cy="237.600" rx="4.100" ry="3.500" fill="#fff" stroke="#555" stroke-width="0.900"/><ellipse cx="94.800" cy="235.600" rx="4.100" ry="3.500" fill="none" stroke="#555" stroke-width="0.900"/><path d="M86.800 237.600 H98.800" stroke="#555" stroke-width="0.800"/><path d="M95.800 237 L95.800 245.200 L98 243.400 L101.600 242.700Z" fill="#333"/><defs><linearGradient id="gtool" x1="0" x2="1"><stop offset="0" stop-color="#222"/><stop offset="1" stop-color="#e2e2e2"/></linearGradient></defs><rect x="63.400" y="252.300" width="12.400" height="11" fill="url(#gtool)" stroke="#333" stroke-width="1"/><g transform="translate(94.400,257.300) rotate(45)"><rect x="-1.800" y="-8.800" width="3.600" height="6" rx="1.500" fill="#333"/><rect x="-3" y="-3.600" width="6" height="1.800" fill="#333"/><path d="M-1.600 -1.800 H1.600 V6.500 L0 8.800 L-1.600 6.500Z" fill="#fff" stroke="#333" stroke-width="0.900"/></g><path d="M63.300 271.500 C66 271 66.500 274 65.500 276 C68 274.500 69 270.500 71.500 271.500 C73.500 272.500 71.500 275 73 276 C74.500 277 76 275.500 76.500 274.500 C77 278 74 280 71.500 279 C69.500 278.200 70 276 69 276.500 C67.500 277.500 67 282 63.500 282.500 C65.500 280 64.500 278 63.500 276.500 C62.500 275 62.800 272.500 63.300 271.500Z" fill="#333"/><rect x="88.500" y="271.200" width="7" height="6" fill="#333"/><rect x="91" y="273.500" width="6.500" height="5.500" fill="#777"/><circle cx="97.300" cy="280" r="3.300" fill="#fff" stroke="#444" stroke-width="1"/><path d="M65.800 289 V301.700 H75.200 V295.800 L72.300 293.300 H61.600" fill="none" stroke="#333" stroke-width="1.100"/><path d="M67.300 301 V294.900 H71.800 L74 296.800 V301Z" fill="#a6a6a6"/><circle cx="92" cy="293.500" r="4.600" fill="none" stroke="#333" stroke-width="1.200"/><path d="M95.300 297 L99.600 301.800" stroke="#333" stroke-width="1.700" stroke-linecap="round"/><path d="M57 307.200 H106" stroke="#d2d2d2" stroke-width="1"/><rect x="58" y="311.800" width="28.800" height="28.600" fill="#fff" stroke="#bdbdbd" stroke-width="1"/><path d="M58.300 340 L86.500 312.200" stroke="#c4161c" stroke-width="1.200"/><rect x="73.300" y="326.200" width="28" height="28" fill="#3f78c5" stroke="#e9eef6" stroke-width="1"/><rect x="80" y="333" width="14.500" height="14.200" fill="#cfcfcf" stroke="#f4f6fa" stroke-width="1.200"/><path d="M94.500 314.500 C98 314 100 316.500 99.500 320" fill="none" stroke="#333" stroke-width="1.300"/><path d="M95.500 312.200 L93 314.800 L96 316.600Z" fill="#333"/><path d="M97.200 319 L99.600 322.200 L101.800 318.800Z" fill="#333"/><rect x="59.500" y="345" width="4.600" height="4.600" fill="#fff" stroke="#333" stroke-width="0.900"/><rect x="62" y="347.500" width="5" height="5" fill="#333"/><rect x="63.300" y="348.800" width="2.400" height="2.400" fill="#fff"/><rect x="58.300" y="360.800" width="14" height="14" rx="1.500" fill="#b7b7b7"/><defs><linearGradient id="gcol" x1="0" x2="1"><stop offset="0" stop-color="#27375a"/><stop offset="0.500" stop-color="#4d6491"/><stop offset="1" stop-color="#27375a"/></linearGradient><linearGradient id="ggr" x1="0" x2="1"><stop offset="0" stop-color="#111"/><stop offset="1" stop-color="#f4f4f4"/></linearGradient></defs><rect x="60.500" y="362.800" width="9.600" height="10" fill="url(#gcol)"/><rect x="76.800" y="362.800" width="9.600" height="10" fill="url(#ggr)" stroke="#555" stroke-width="0.600"/><rect x="92.600" y="362.800" width="9.600" height="10" fill="#fff" stroke="#999" stroke-width="0.700"/><path d="M92.800 372.600 L102 363" stroke="#c4161c" stroke-width="1.300"/><rect x="58.300" y="380" width="14" height="13.500" rx="1.500" fill="#b7b7b7"/><circle cx="64.1" cy="385.5" r="3.200" fill="#fff" stroke="#555" stroke-width="0.800"/><rect x="64.8" y="386" width="4.500" height="4.500" fill="#444"/><circle cx="80.5" cy="385.5" r="3.200" fill="#fff" stroke="#555" stroke-width="0.800"/><rect x="81.2" y="386" width="4.500" height="4.500" fill="#444"/><circle cx="96.1" cy="385.5" r="3.200" fill="#fff" stroke="#555" stroke-width="0.800"/><rect x="96.8" y="386" width="4.500" height="4.500" fill="#444"/><rect x="78.800" y="402.200" width="10.600" height="8" rx="1.200" fill="#f0f0f0" stroke="#333" stroke-width="1.100"/><rect x="74.300" y="405.800" width="10.600" height="8" rx="1.200" fill="#d8d8d8" stroke="#333" stroke-width="1.100"/><circle cx="78" cy="432.800" r="0.900" fill="#333"/><circle cx="81.700" cy="432.800" r="0.900" fill="#333"/><circle cx="85.400" cy="432.800" r="0.900" fill="#333"/></svg>
<div class="b" style="left:522.30px;top:18.60px;width:500.00px;height:535.00px;background:#efefef;border-radius:5px 5px 6px 6px;box-shadow:0 16px 26px 3px rgba(0,0,0,0.52), 0 2px 10px 1px rgba(0,0,0,0.35);"></div>
<div class="b" style="left:522.30px;top:18.60px;width:500.00px;height:17.20px;background:linear-gradient(#eceaec,#d9d7d9);border-radius:5px 5px 0 0;border-bottom:1px solid #c6c6c6;"></div>
<div class="b" style="left:1022.20px;top:18.60px;width:2.00px;height:560.00px;background:#2b2b2b;"></div>
<span class="t" style="left:721.50px;top:20.80px;font-size:10.5px;line-height:15px;color:#1a1a1a;letter-spacing:0.119px;-webkit-text-stroke:0.300px #1a1a1a;">Opciones de giro 3D</span>
<div class="b" style="left:530.00px;top:52.50px;width:484.00px;height:163.50px;border:1px solid #e4e4e4;border-radius:3px;background:#eeeeee;"></div>
<div class="b" style="left:534.00px;top:52.00px;width:190.00px;height:2.00px;background:#eeeeee;"></div>
<span class="t" style="left:537.60px;top:45.50px;font-size:10.5px;line-height:15px;color:#222;letter-spacing:-0.123px;">Posición:</span>
<div class="b" style="left:582.00px;top:44.00px;width:139.50px;height:16.50px;background:#fff;border:1px solid #e1e1e1;border-radius:3px;"></div>
<span class="t" style="left:587.50px;top:45.50px;font-size:10.5px;line-height:15px;color:#111;letter-spacing:-0.034px;-webkit-text-stroke:0.250px #111;">Rotación personalizada</span>
<svg style="left:708.00px;top:51.00px" width="7" height="5" viewBox="0 0 7 5"><path d="M0.800 0.900 L3.500 3.500 L6.200 0.900" fill="none" stroke="#444" stroke-width="1"/></svg>
<div class="b" style="left:741.00px;top:75.60px;width:53.50px;height:15.40px;background:#fff;border:1px solid #e1e1e1;border-radius:2px;"></div>
<span class="t" style="left:745.60px;top:76.00px;font-size:10.5px;line-height:15px;color:#111;letter-spacing:0.400px;">13°</span>
<div class="b" style="left:741.00px;top:112.20px;width:53.50px;height:15.40px;background:#fff;border:1px solid #e1e1e1;border-radius:2px;"></div>
<span class="t" style="left:745.60px;top:112.60px;font-size:10.5px;line-height:15px;color:#111;letter-spacing:0.400px;">-30°</span>
<div class="b" style="left:741.00px;top:148.80px;width:53.50px;height:15.40px;background:#fff;border:1px solid #e1e1e1;border-radius:2px;"></div>
<span class="t" style="left:745.60px;top:149.20px;font-size:10.5px;line-height:15px;color:#111;letter-spacing:0.400px;">-2°</span>
<span class="t" style="left:687.00px;top:182.20px;font-size:8.5px;line-height:12px;color:#222;transform:scaleX(1.1329);-webkit-text-stroke:0.180px #333;">Perspectiva:</span>
<div class="b" style="left:745.00px;top:180.00px;width:49.50px;height:15.20px;background:#fff;border:1px solid #e1e1e1;border-radius:2px;"></div>
<div class="b" style="left:779.00px;top:180.50px;width:1.00px;height:14.20px;background:#e2e2e2;"></div>
<span class="t" style="left:749.00px;top:180.50px;font-size:10.5px;line-height:15px;color:#111;">0°</span>
<svg style="left:784px;top:184.500px" width="5" height="7" viewBox="0 0 5 7"><path d="M1 0.800 L3.800 3.500 L1 6.200" fill="none" stroke="#555" stroke-width="1"/></svg>
<div class="b" style="left:530.00px;top:226.00px;width:484.00px;height:80.50px;border:1px solid #e4e4e4;border-radius:3px;background:#eeeeee;"></div>
<div class="b" style="left:534.00px;top:225.50px;width:30.00px;height:2.00px;background:#eeeeee;"></div>
<span class="t" style="left:537.60px;top:225.10px;font-size:10.5px;line-height:15px;color:#222;transform:scaleX(0.9639);">Girar</span>
<span class="t" style="left:537.60px;top:253.70px;font-size:10.5px;line-height:15px;color:#222;letter-spacing:0.125px;">Ángulo:</span>
<div class="b" style="left:610.00px;top:253.40px;width:53.50px;height:15.60px;background:#fff;border:1px solid #e1e1e1;border-radius:2px;"></div>
<span class="t" style="left:614.50px;top:253.80px;font-size:10.5px;line-height:15px;color:#111;letter-spacing:0.400px;">360°</span>
<span class="t" style="left:671.80px;top:255.20px;font-size:8.5px;line-height:12px;color:#222;transform:scaleX(1.1206);-webkit-text-stroke:0.180px #333;">Remate:</span>
<span class="t" style="left:537.60px;top:286.20px;font-size:8.5px;line-height:12px;color:#222;transform:scaleX(1.2241);-webkit-text-stroke:0.180px #333;">Desplazamiento:</span>
<div class="b" style="left:618.60px;top:284.30px;width:68.00px;height:15.00px;background:#fff;border:1px solid #e1e1e1;border-radius:2px;"></div>
<div class="b" style="left:671.60px;top:284.80px;width:1.00px;height:14.00px;background:#e2e2e2;"></div>
<span class="t" style="left:622.30px;top:284.70px;font-size:10.5px;line-height:15px;color:#111;letter-spacing:0.121px;">0 pt</span>
<svg style="left:676.500px;top:288.500px" width="5" height="7" viewBox="0 0 5 7"><path d="M1 0.800 L3.800 3.500 L1 6.200" fill="none" stroke="#555" stroke-width="1"/></svg>
<span class="t" style="left:690.80px;top:285.70px;font-size:9px;line-height:13px;color:#222;transform:scaleX(1.1006);-webkit-text-stroke:0.180px #333;">desde</span>
<div class="b" style="left:720.60px;top:282.80px;width:106.00px;height:17.20px;background:#fff;border:1.500px solid #4a88d8;border-radius:3px;box-shadow:0 0 2px rgba(74,136,216,0.600);"></div>
<span class="t" style="left:726.60px;top:284.30px;font-size:10.5px;line-height:15px;color:#111;letter-spacing:-0.069px;-webkit-text-stroke:0.250px #111;">Borde derecho</span>
<svg style="left:814.00px;top:290.00px" width="7" height="5" viewBox="0 0 7 5"><path d="M0.800 0.900 L3.500 3.500 L6.200 0.900" fill="none" stroke="#444" stroke-width="1"/></svg>
<div class="b" style="left:530.00px;top:325.00px;width:484.00px;height:184.50px;border:1px solid #e4e4e4;border-radius:3px;background:#eeeeee;"></div>
<div class="b" style="left:534.00px;top:324.50px;width:240.00px;height:2.00px;background:#eeeeee;"></div>
<span class="t" style="left:537.60px;top:318.10px;font-size:10.5px;line-height:15px;color:#222;transform:scaleX(0.9676);">Superficie:</span>
<div class="b" style="left:589.60px;top:317.30px;width:123.60px;height:14.60px;background:#fff;border:1px solid #e1e1e1;border-radius:3px;"></div>
<span class="t" style="left:595.00px;top:317.90px;font-size:10.5px;line-height:15px;color:#111;letter-spacing:0.072px;-webkit-text-stroke:0.250px #111;">Difuminado plástico</span>
<svg style="left:702.10px;top:322.80px" width="7" height="5" viewBox="0 0 7 5"><path d="M0.800 0.900 L3.500 3.500 L6.200 0.900" fill="none" stroke="#444" stroke-width="1"/></svg>
<span class="t" style="left:637.70px;top:343.30px;font-size:10.5px;line-height:15px;color:#222;letter-spacing:0.040px;">Intensidad de luz:</span>
<span class="t" style="left:655.00px;top:368.10px;font-size:10.5px;line-height:15px;color:#222;letter-spacing:0.026px;">Luz ambiente:</span>
<span class="t" style="left:608.50px;top:393.10px;font-size:10.5px;line-height:15px;color:#222;letter-spacing:0.030px;">Intensidad de resaltado:</span>
<span class="t" style="left:621.00px;top:417.70px;font-size:10.5px;line-height:15px;color:#222;letter-spacing:-0.040px;">Tamaño de resaltado:</span>
<span class="t" style="left:645.00px;top:442.30px;font-size:10.5px;line-height:15px;color:#222;letter-spacing:-0.098px;">Pasos de fusión:</span>
<span class="t" style="left:622.00px;top:466.70px;font-size:10.5px;line-height:15px;color:#222;letter-spacing:0.130px;">Color de difuminado:</span>
<span class="t" style="left:552.20px;top:488.10px;font-size:10.5px;line-height:15px;color:#222;letter-spacing:-0.079px;">Conservar tintas planas</span>
<span class="t" style="left:684.00px;top:488.10px;font-size:10.5px;line-height:15px;color:#222;transform:scaleX(0.9503);">Dibujar caras ocultas</span>
<span class="t" style="left:544.30px;top:529.10px;font-size:8.8px;line-height:13px;color:#222;transform:scaleX(1.1517);-webkit-text-stroke:0.180px #333;">Previsualizar</span>
<div class="b" style="left:615.40px;top:525.40px;width:150.00px;height:20.60px;background:#fbfbfb;border:1px solid #9a9a9a;border-bottom:1.600px solid #555;border-radius:10.500px;"></div>
<span class="t" style="left:635.30px;top:528.70px;font-size:10px;line-height:14px;color:#222;transform:scaleX(1.0865);">Mapear ilustración...</span>
<svg style="left:0;top:0" width="1024" height="576" viewBox="0 0 1024 576"><defs><pattern id="dots" x="539.800" y="71" width="5.604" height="11.208" patternUnits="userSpaceOnUse"><rect x="0" y="0" width="1.200" height="1.200" fill="#d4d4d4"/><rect x="0" y="5.604" width="1.200" height="1.200" fill="#a9a9a9"/></pattern><pattern id="dots2" x="540.200" y="342.400" width="5.640" height="5.640" patternUnits="userSpaceOnUse"><rect x="0" y="0" width="1.200" height="1.200" fill="#b9b9b9"/></pattern></defs><rect x="539.800" y="71" width="136" height="135.800" fill="url(#dots)"/><path d="M540 138.500 H675" stroke="#dedede" stroke-width="1.200"/><path d="M607.400 71.700 V205" stroke="#8a8a8a" stroke-width="1"/><path d="M565.400 175.100 L598.500 162 L653.300 163.400 L621 177.200Z" fill="#c6c6c6"/><path d="M560.400 112.200 L593.200 99 L598.500 162 L565.400 175.100Z" fill="#8b8b8b"/><path d="M593.200 99 L648.900 100.400 L653.300 163.400 L598.500 162Z" fill="#0b97ae"/><g transform="translate(0.700,0.900)"><path d="M602 135.500 L604.800 139 H603 V143.500 H604.800 L602 147 L599.200 143.500 H601 V139 H599.200Z" fill="#111" stroke="#fff" stroke-width="0.800"/><path d="M597 141.200 L599.200 139 V143.500Z M607 141.200 L604.800 139 V143.500Z" fill="#111" stroke="#fff" stroke-width="0.600"/></g><circle cx="721.6" cy="82.9" r="13.300" fill="#efefef" stroke="#222" stroke-width="1.300"/><path d="M721.6 82.9 L731.83 80.54" stroke="#333" stroke-width="1.5"/><circle cx="721.6" cy="119.5" r="13.300" fill="#efefef" stroke="#222" stroke-width="1.300"/><path d="M721.6 119.5 L732.43 125.75" stroke="#222" stroke-width="1.5"/><circle cx="721.6" cy="156.1" r="13.300" fill="#efefef" stroke="#222" stroke-width="1.300"/><path d="M721.6 156.1 L732.59 156.48" stroke="#8a8a8a" stroke-width="2.2"/><circle cx="590.6" cy="261" r="13.300" fill="#efefef" stroke="#222" stroke-width="1.300"/><path d="M590.6 261 L601.60 261.00" stroke="#8a8a8a" stroke-width="2.2"/><path d="M688.500 86 H697" stroke="#444" stroke-width="1"/><path d="M697.800 86 h2" stroke="#444" stroke-width="1"/><path d="M689 82.500 C690.500 79.500 695 79 696.500 82.500 C697 84 696.500 85 696 86" fill="none" stroke="#444" stroke-width="1"/><path d="M688 80 L691.200 80.600 L689.400 83.400Z" fill="#444"/><path d="M693.500 112 V125" stroke="#444" stroke-width="1"/><path d="M693.500 126 v1.500" stroke="#444" stroke-width="1"/><path d="M690 116 C688.500 118 688.500 121 690 122.500" fill="none" stroke="#444" stroke-width="0.800" stroke-dasharray="1 1"/><path d="M693.500 116 C697.500 115 699.500 119 697.500 121.500 C696.500 122.500 695 122.500 693.500 122.500" fill="none" stroke="#444" stroke-width="1"/><path d="M697 114.500 L694.500 116.500 L697.500 118Z" fill="#444"/><path d="M689.500 153 A5.500 5.500 0 1 0 693 150.800" fill="none" stroke="#444" stroke-width="1" stroke-dasharray="1.200 1"/><path d="M688.300 150.500 L692.500 150.800 L690 154.200Z" fill="#444"/><circle cx="694" cy="156.300" r="1" fill="#444"/><rect x="712.500" y="251.500" width="19" height="18.200" rx="2" fill="#b2b2b2" stroke="#a4a4a4" stroke-width="0.800"/><rect x="731.500" y="251.500" width="18.600" height="18.200" rx="2" fill="#f2f2f2" stroke="#dcdcdc" stroke-width="0.800"/><circle cx="720.300" cy="259" r="4.300" fill="#8b8b8b" stroke="#222" stroke-width="1.100"/><circle cx="723.300" cy="262.200" r="4.300" fill="#6f6f6f" stroke="#222" stroke-width="1.100"/><circle cx="739.300" cy="259" r="4.300" fill="#fff" stroke="#333" stroke-width="1.100"/><circle cx="742.300" cy="262.200" r="4.300" fill="#888" stroke="#333" stroke-width="1.100"/><rect x="540.200" y="342.400" width="52" height="52" fill="url(#dots2)"/><defs><radialGradient id="sph" cx="0.640" cy="0.360" r="0.720" fx="0.660" fy="0.340"><stop offset="0" stop-color="#d2d2d2"/><stop offset="0.350" stop-color="#a4a4a4"/><stop offset="0.750" stop-color="#7a7a7a"/><stop offset="1" stop-color="#686868"/></radialGradient></defs><circle cx="566.900" cy="369.600" r="24" fill="url(#sph)"/><rect x="571.600" y="357.400" width="8.800" height="8.800" rx="1" fill="#111"/><circle cx="576" cy="361.800" r="2.700" fill="#fff"/><path d="M543.500 405.500 H545.500 L548.500 403 V410.500 L545.500 408 H543.500Z" fill="none" stroke="#444" stroke-width="0.900" stroke-linejoin="round"/><circle cx="551.800" cy="406.800" r="2.800" fill="none" stroke="#444" stroke-width="0.900" stroke-dasharray="1.500 1"/><path d="M567.500 403 H566 V410.500 H567.500 M571.500 403 H573 V410.500 H571.500" fill="none" stroke="#444" stroke-width="0.900"/><path d="M569.500 405 V408.500 M567.800 406.750 H571.200" stroke="#444" stroke-width="0.900"/><path d="M585.500 404.500 H592.500 M587.500 404.500 V403.300 H590.500 V404.500" fill="none" stroke="#c2c2c2" stroke-width="1"/><path d="M586.300 405.800 H591.700 V411 H586.300Z" fill="#c8c8c8"/><rect x="538.900" y="491.200" width="8.600" height="8.600" rx="1.500" fill="#fdfdfd" stroke="#8e8e8e" stroke-width="0.900"/><rect x="670.500" y="491.200" width="8.600" height="8.600" rx="1.500" fill="#fdfdfd" stroke="#8e8e8e" stroke-width="0.900"/><rect x="530.700" y="531.300" width="9.300" height="9.300" rx="1.800" fill="#4e4e4e"/><path d="M532.700 536 L534.800 538.300 L538.200 533.500" fill="none" stroke="#fff" stroke-width="1.400"/></svg>
<div class="b" style="left:602.00px;top:563.50px;width:20.00px;height:10.50px;background:#8e8e8e;border-radius:5px;opacity:0.850;"></div>
<div class="b" style="left:711.50px;top:297.80px;width:320.00px;height:290.00px;background:#fff;border-top-left-radius:52px;"></div>
<div class="b" style="left:735.00px;top:312.50px;width:253.00px;height:249.00px;background:#330000;border-radius:47px;"></div>
<svg style="left:0;top:0" width="1024" height="576" viewBox="0 0 1024 576"><defs><clipPath id="istem"><rect x="880" y="398" width="70" height="95"/></clipPath></defs><text x="783.800" y="487.300" font-family="Liberation Sans, sans-serif" font-weight="700" font-size="160.900" fill="#ff9a00" stroke="#ff9a00" stroke-width="2" textLength="110.500" lengthAdjust="spacingAndGlyphs">A</text><g clip-path="url(#istem)"><text x="886.300" y="488.300" font-family="Liberation Sans, sans-serif" font-weight="700" font-size="163.800" fill="#ff9a00" textLength="53.700" lengthAdjust="spacingAndGlyphs">i</text></g><circle cx="914" cy="381.500" r="13.700" fill="#ff9a00"/></svg>
</div></body></html>
